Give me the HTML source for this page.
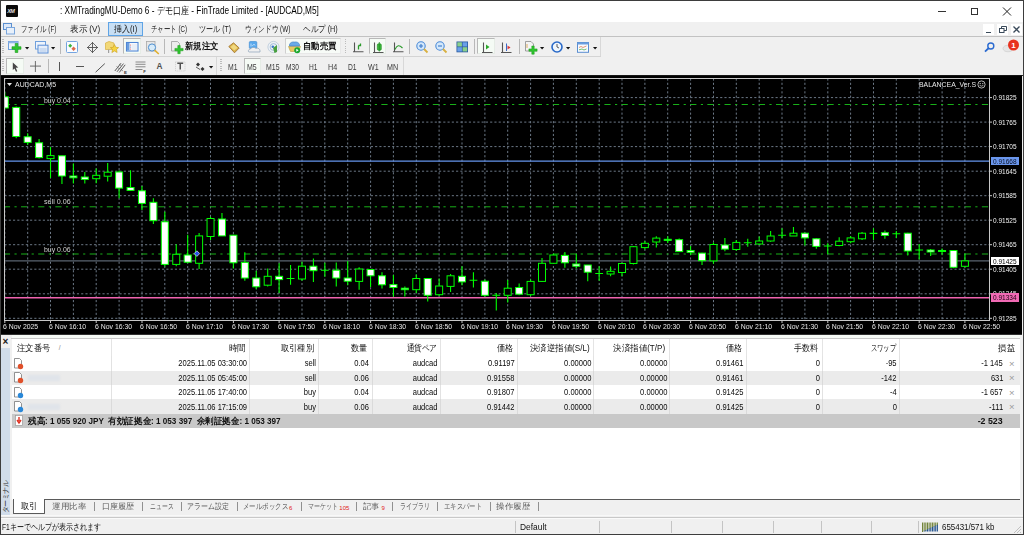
<!DOCTYPE html>
<html><head><meta charset="utf-8"><style>
html,body{margin:0;padding:0;width:1024px;height:535px;overflow:hidden;background:#f0f0f0;}
body{position:relative;font-family:"Liberation Sans", sans-serif;}
.a{position:absolute;}
svg.a{overflow:visible;}
</style></head><body>
<div class="a" style="left:0px;top:0px;width:1024px;height:535px;background:#f0f0f0;"></div><div class="a" style="left:0px;top:0px;width:1024px;height:22px;background:#ffffff;"></div><div class="a" style="left:0px;top:0px;width:1024px;height:1px;background:#3d3d3d;"></div><div class="a" style="left:0px;top:0px;width:1px;height:535px;background:#3d3d3d;"></div><div class="a" style="left:1023px;top:0px;width:1px;height:535px;background:#3d3d3d;"></div><div class="a" style="left:0px;top:534px;width:1024px;height:1px;background:#3d3d3d;"></div><div class="a" style="left:6px;top:5px;width:12px;height:12px;background:#0a0a0a;border-radius:1px;"></div><div class="a t" style="top:7.70px;font-size:5.5px;line-height:6.60px;color:#e0e0e0;font-weight:bold;white-space:nowrap;left:7.2px;letter-spacing:-0.5px;font-style:italic;"><span>XM</span></div><div class="a t" style="top:5.02px;font-size:10.3px;line-height:12.36px;color:#000;font-weight:normal;white-space:nowrap;left:60.4px;--tw:258.9;transform-origin:left center;transform:scaleX(0.8325);"><span>: XMTradingMU-Demo 6 - デモ口座 - FinTrade Limited - [AUDCAD,M5]</span></div><div class="a" style="left:938px;top:10.5px;width:8px;height:1px;background:#333;"></div><div class="a" style="left:970.5px;top:7.5px;width:7px;height:7px;border:1px solid #333;box-sizing:border-box;"></div><svg class="a" style="left:1002px;top:7px" width="10" height="9"><path d="M1 0.5 L9 8.5 M9 0.5 L1 8.5" stroke="#222" stroke-width="1"/></svg><div class="a" style="left:1px;top:22px;width:1022px;height:14px;background:#f0f0f0;"></div><div class="a" style="left:1px;top:36px;width:1022px;height:1px;background:#c2c2c2;"></div><svg class="a" style="left:3px;top:23px" width="13" height="12"><rect x="0.5" y="0.5" width="8" height="6" fill="#dce8f8" stroke="#5b8fd0"/><rect x="3.5" y="4.5" width="8" height="6.5" fill="#e8f0fa" stroke="#7aa6dc"/></svg><div class="a" style="left:108px;top:22.2px;width:34.8px;height:13.5px;background:#c8dff4;border:1px solid #5fa4e6;box-sizing:border-box;"></div><div class="a t" style="top:24.04px;font-size:8.6px;line-height:10.32px;color:#1a1a1a;font-weight:normal;white-space:nowrap;left:21.2px;--tw:35.2;transform-origin:left center;transform:scaleX(0.8186);"><span>ファイル (F)</span></div><div class="a t" style="top:24.04px;font-size:8.6px;line-height:10.32px;color:#1a1a1a;font-weight:normal;white-space:nowrap;left:70px;--tw:30.1;transform-origin:left center;transform:scaleX(1.0379);"><span>表示 (V)</span></div><div class="a t" style="top:24.04px;font-size:8.6px;line-height:10.32px;color:#1a1a1a;font-weight:normal;white-space:nowrap;left:113.5px;--tw:23.2;transform-origin:left center;transform:scaleX(1.0087);"><span>挿入(I)</span></div><div class="a t" style="top:24.04px;font-size:8.6px;line-height:10.32px;color:#1a1a1a;font-weight:normal;white-space:nowrap;left:151px;--tw:36;transform-origin:left center;transform:scaleX(0.8182);"><span>チャート (C)</span></div><div class="a t" style="top:24.04px;font-size:8.6px;line-height:10.32px;color:#1a1a1a;font-weight:normal;white-space:nowrap;left:199px;--tw:32;transform-origin:left center;transform:scaleX(0.8889);"><span>ツール (T)</span></div><div class="a t" style="top:24.04px;font-size:8.6px;line-height:10.32px;color:#1a1a1a;font-weight:normal;white-space:nowrap;left:244.7px;--tw:45.3;transform-origin:left center;transform:scaleX(0.8547);"><span>ウィンドウ (W)</span></div><div class="a t" style="top:24.04px;font-size:8.6px;line-height:10.32px;color:#1a1a1a;font-weight:normal;white-space:nowrap;left:303px;--tw:34.7;transform-origin:left center;transform:scaleX(0.9378);"><span>ヘルプ (H)</span></div><div class="a" style="left:982.6px;top:23.6px;width:11.5px;height:11.8px;background:#ffffff;"></div><div class="a" style="left:996.9px;top:23.6px;width:11.5px;height:11.8px;background:#ffffff;"></div><div class="a" style="left:1010.7px;top:23.6px;width:11.5px;height:11.8px;background:#ffffff;"></div><div class="a" style="left:985.5px;top:31.5px;width:5px;height:1.3px;background:#3a4a5a;"></div><svg class="a" style="left:999px;top:26px" width="8" height="7"><rect x="0.5" y="2.5" width="4.5" height="4" fill="none" stroke="#3a4a5a"/><path d="M2.5 2.5 V0.5 H7.5 V4.5 H5" fill="none" stroke="#3a4a5a"/></svg><svg class="a" style="left:1013px;top:26px" width="7" height="7"><path d="M0.5 0.5 L6.5 6.5 M6.5 0.5 L0.5 6.5" stroke="#3a4a5a" stroke-width="1.3"/></svg><div class="a" style="left:1px;top:55.5px;width:600px;height:1px;background:#d4d4d4;"></div><div class="a" style="left:1px;top:75px;width:1022px;height:1px;background:#2a2a2a;"></div><div class="a" style="left:1px;top:37px;width:600px;height:19px;border-right:1px solid #d8d8d8;box-sizing:border-box;"></div><div class="a" style="left:2.1px;top:39px;width:1.5px;height:1.1px;background:#bcbcbc;"></div><div class="a" style="left:2.1px;top:41.2px;width:1.5px;height:1.1px;background:#bcbcbc;"></div><div class="a" style="left:2.1px;top:43.400000000000006px;width:1.5px;height:1.1px;background:#bcbcbc;"></div><div class="a" style="left:2.1px;top:45.60000000000001px;width:1.5px;height:1.1px;background:#bcbcbc;"></div><div class="a" style="left:2.1px;top:47.80000000000001px;width:1.5px;height:1.1px;background:#bcbcbc;"></div><div class="a" style="left:2.1px;top:50.000000000000014px;width:1.5px;height:1.1px;background:#bcbcbc;"></div><div class="a" style="left:2.1px;top:52.20000000000002px;width:1.5px;height:1.1px;background:#bcbcbc;"></div><svg class="a" style="left:8px;top:41px" width="14" height="12" viewBox="0 0 14 12"><rect x="0.5" y="0.5" width="9.5" height="8" fill="#eef4fc" stroke="#6f9fdc"/><rect x="0.5" y="0.5" width="9.5" height="1.8" fill="#8fb6e8"/><path d="M7.2 2.5 h2.6 v3.2 h3.2 v2.6 h-3.2 v3.2 h-2.6 v-3.2 h-3.2 v-2.6 h3.2z" fill="#2ec52e" stroke="#1a9a1a" stroke-width="0.6"/></svg><svg class="a" style="left:24.599999999999998px;top:46.6px" width="4.2" height="2.5"><path d="M0 0 H4.2 L2.1 2.5 Z" fill="#111"/></svg><svg class="a" style="left:34.5px;top:41px" width="14" height="12.5" viewBox="0 0 14 12.5"><rect x="0.5" y="0.5" width="10" height="7.5" fill="#eef4fc" stroke="#6f9fdc"/><rect x="3" y="4.2" width="10" height="7.8" fill="#e6eefa" stroke="#5c8fd6"/><path d="M4.5 8 h7 M4.5 10 h7" stroke="#9ab8e0" stroke-width="0.7"/></svg><svg class="a" style="left:51.3px;top:46.6px" width="4.2" height="2.5"><path d="M0 0 H4.2 L2.1 2.5 Z" fill="#111"/></svg><div class="a" style="left:60.3px;top:39.3px;width:1px;height:14.700000000000003px;background:#b8b8b8;"></div><svg class="a" style="left:66px;top:41px" width="12" height="12" viewBox="0 0 12 12"><rect x="0.5" y="0.5" width="11" height="11" rx="1" fill="#fafcff" stroke="#74a4e0"/><path d="M4.2 2.8 L6.2 4.8 L4.2 6.8 L2.2 4.8z" fill="#3cb43c"/><path d="M7.6 5.6 L9.8 7.8 L7.6 10 L5.4 7.8z" fill="#e06a4a"/></svg><svg class="a" style="left:87px;top:42px" width="11" height="11" viewBox="0 0 11 11"><path d="M5.5 0.5 L10.5 5.5 L5.5 10.5 L0.5 5.5z" fill="none" stroke="#606060" stroke-width="0.9"/><path d="M5.5 0 V11 M0 5.5 H11" stroke="#505050" stroke-width="0.9"/></svg><svg class="a" style="left:105px;top:41px" width="14" height="12.5" viewBox="0 0 14 12.5"><path d="M0.5 2 L4 0.5 L9 2 V8.5 H0.5z" fill="#f2d878" stroke="#d8b040" stroke-width="0.7"/><path d="M9.5 3.5 L10.8 6.3 L13.6 6.6 L11.5 8.5 L12.1 11.5 L9.5 10 L6.9 11.5 L7.5 8.5 L5.4 6.6 L8.2 6.3z" fill="#f6d440" stroke="#c9a020" stroke-width="0.6"/><rect x="3" y="8.5" width="1.2" height="3.5" fill="#a0a0a0"/></svg><div class="a" style="left:123.4px;top:38.4px;width:18.099999999999994px;height:16.1px;background:#f5fbf5;border:1px solid #e6ece6;border-top-color:#b8b8b8;border-left-color:#b8b8b8;box-sizing:border-box;"></div><svg class="a" style="left:126px;top:42px" width="12.5" height="9.5" viewBox="0 0 12.5 9.5"><rect x="0.5" y="0.5" width="11.5" height="8.5" fill="#ffffff" stroke="#4f86d6" stroke-width="1.1"/><rect x="1" y="1" width="2.5" height="7.5" fill="#6a9ee0"/><circle cx="4.6" cy="3" r="0.5" fill="#d04040"/><circle cx="4.6" cy="5" r="0.5" fill="#4060c0"/><circle cx="4.6" cy="7" r="0.5" fill="#d04040"/><path d="M5.5 3 h5.5 M5.5 5 h5.5 M5.5 7 h5.5" stroke="#c0d0e8" stroke-width="0.7"/></svg><svg class="a" style="left:146px;top:41px" width="14" height="13.5" viewBox="0 0 14 13.5"><rect x="0.5" y="0.5" width="8.5" height="9.5" fill="#e8e8e8" stroke="#a8a8a8" stroke-width="0.8"/><circle cx="6" cy="6.5" r="3.6" fill="#d8ecfa" stroke="#4c8ed0" stroke-width="1"/><path d="M8.6 9.2 L12.8 13" stroke="#e0b030" stroke-width="1.6"/></svg><div class="a" style="left:164.3px;top:39.3px;width:1px;height:14.700000000000003px;background:#b8b8b8;"></div><svg class="a" style="left:171px;top:41px" width="13" height="13" viewBox="0 0 13 13"><path d="M0.5 0.5 H6.5 L8.5 2.5 V10 H0.5z" fill="#ececec" stroke="#9a9a9a" stroke-width="0.8"/><path d="M6.8 4.5 h2.4 v2.9 h2.9 v2.4 h-2.9 v2.9 h-2.4 v-2.9 h-2.9 v-2.4 h2.9z" fill="#2ec52e" stroke="#1a9a1a" stroke-width="0.5"/></svg><div class="a t" style="top:41.10px;font-size:9px;line-height:10.80px;color:#111;font-weight:bold;white-space:nowrap;left:185.2px;--tw:33.4;transform-origin:left center;transform:scaleX(1.1929);"><span>新規注文</span></div><svg class="a" style="left:228px;top:41.5px" width="12" height="11.5" viewBox="0 0 12 11.5"><path d="M0.8 4.5 L5.5 0.8 L11.2 6 L6.5 10.8z" fill="#d9b24a" stroke="#a0702a" stroke-width="0.8"/><path d="M2.5 5 L5.8 2.3 L9.5 5.8 L6.3 8.5z" fill="#f0d880"/></svg><svg class="a" style="left:247.5px;top:41.3px" width="13" height="11.8" viewBox="0 0 13 11.8"><rect x="1.3" y="0.5" width="7.5" height="7" rx="1" fill="#58a8ec" stroke="#3a88d0" stroke-width="0.6"/><path d="M3 2.5 V5.5 M4.5 5 C5 3 7 3 7 4.5" stroke="#e8f4ff" stroke-width="0.7" fill="none"/><path d="M1 11 C0 11 0 8 2.5 8 C3 6 7 6 8 7.5 C10 6.5 12.5 8 12 11z" fill="#f0f0f0" stroke="#8aa0b8" stroke-width="0.7"/></svg><svg class="a" style="left:267.3px;top:41.3px" width="13" height="12" viewBox="0 0 13 12"><circle cx="6.5" cy="6" r="5.6" fill="#eef2f6" stroke="#b8c8d8" stroke-width="0.8"/><circle cx="6.5" cy="6" r="3.4" fill="none" stroke="#90b0d0" stroke-width="0.8"/><circle cx="5.8" cy="5.8" r="1.3" fill="#3a78c8"/><path d="M6 7 L7.5 12 L10 11 L10 4z" fill="#4aa040"/></svg><div class="a" style="left:285.3px;top:38.2px;width:55.5px;height:15.8px;background:#f7fbf7;border:1px solid #cfcfcf;border-right-color:#e8e8e8;border-bottom-color:#e8e8e8;box-sizing:border-box;"></div><svg class="a" style="left:287.5px;top:40.5px" width="13" height="12.5" viewBox="0 0 13 12.5"><path d="M0.5 5.5 L12.5 5.5 L10.5 10.5 L2.5 10.5z" fill="#e8c860" stroke="#b89a40" stroke-width="0.6"/><path d="M1.5 5 C1 2 4 0.5 6.5 1 C9 0.5 12 2 11.5 5z" fill="#6aaae8" stroke="#3a7ac0" stroke-width="0.6"/><circle cx="9.2" cy="9.3" r="3" fill="#1aa830"/><path d="M8.3 7.8 L10.6 9.3 L8.3 10.8z" fill="#fff"/></svg><div class="a t" style="top:41.00px;font-size:9px;line-height:10.80px;color:#111;font-weight:bold;white-space:nowrap;left:303px;--tw:33.3;transform-origin:left center;transform:scaleX(1.1893);"><span>自動売買</span></div><div class="a" style="left:344.6px;top:39px;width:1.5px;height:1.1px;background:#bcbcbc;"></div><div class="a" style="left:344.6px;top:41.2px;width:1.5px;height:1.1px;background:#bcbcbc;"></div><div class="a" style="left:344.6px;top:43.400000000000006px;width:1.5px;height:1.1px;background:#bcbcbc;"></div><div class="a" style="left:344.6px;top:45.60000000000001px;width:1.5px;height:1.1px;background:#bcbcbc;"></div><div class="a" style="left:344.6px;top:47.80000000000001px;width:1.5px;height:1.1px;background:#bcbcbc;"></div><div class="a" style="left:344.6px;top:50.000000000000014px;width:1.5px;height:1.1px;background:#bcbcbc;"></div><div class="a" style="left:344.6px;top:52.20000000000002px;width:1.5px;height:1.1px;background:#bcbcbc;"></div><svg class="a" style="left:352.5px;top:42.3px" width="11" height="11" viewBox="0 0 11 11"><path d="M1.5 0.5 V9.8 M0 9.8 H10.5" stroke="#555" stroke-width="1.1" fill="none"/><path d="M5.5 7.5 V3.5 M5.5 3.5 H7.5 V1.5" stroke="#2a9a2a" stroke-width="1.3" fill="none"/></svg><div class="a" style="left:369.2px;top:38.4px;width:17.19999999999999px;height:16.1px;background:#f5fbf5;border:1px solid #e6ece6;border-top-color:#b8b8b8;border-left-color:#b8b8b8;box-sizing:border-box;"></div><svg class="a" style="left:372.5px;top:41.5px" width="11" height="11.8" viewBox="0 0 11 11.8"><path d="M1.5 0.5 V10.5 M0 10.5 H10.5" stroke="#555" stroke-width="1.1" fill="none"/><rect x="4.3" y="1.8" width="4" height="6.5" rx="1.2" fill="#3ab83a" stroke="#1f8a1f" stroke-width="0.6"/><path d="M6.3 0 V9.5" stroke="#1f8a1f" stroke-width="0.8"/></svg><svg class="a" style="left:392.7px;top:42.3px" width="11" height="11" viewBox="0 0 11 11"><path d="M1.5 0.5 V9.8 M0 9.8 H10.5" stroke="#555" stroke-width="1.1" fill="none"/><path d="M2 7.5 C4 3 6 2.5 9.5 6" stroke="#2a9a2a" stroke-width="1.1" fill="none"/></svg><div class="a" style="left:409.3px;top:39.3px;width:1px;height:14.700000000000003px;background:#b8b8b8;"></div><svg class="a" style="left:415.5px;top:41.2px" width="12.5" height="12.5" viewBox="0 0 12.5 12.5"><circle cx="5" cy="5" r="4.2" fill="#d4e8fb" stroke="#4a8ad8" stroke-width="1.1"/><path d="M8 8 L11.5 11.5" stroke="#d8b040" stroke-width="1.8"/><path d="M3 5 H7 M5 3 V7" stroke="#3a78c8" stroke-width="1.1"/></svg><svg class="a" style="left:435.3px;top:41.2px" width="12.5" height="12.5" viewBox="0 0 12.5 12.5"><circle cx="5" cy="5" r="4.2" fill="#d4e8fb" stroke="#4a8ad8" stroke-width="1.1"/><path d="M8 8 L11.5 11.5" stroke="#d8b040" stroke-width="1.8"/><path d="M3 5 H7" stroke="#3a78c8" stroke-width="1.1"/></svg><svg class="a" style="left:455.5px;top:41.3px" width="12.5" height="11.8" viewBox="0 0 12.5 11.8"><rect x="0.5" y="0.5" width="11.5" height="10.8" fill="#2a5aa0"/><rect x="1.3" y="1.3" width="4.6" height="4.2" fill="#8ad08a"/><rect x="6.6" y="1.3" width="4.6" height="4.2" fill="#6aa0e8"/><rect x="1.3" y="6.2" width="4.6" height="4.3" fill="#6aa0e8"/><rect x="6.6" y="6.2" width="4.6" height="4.3" fill="#8ad08a"/></svg><div class="a" style="left:474px;top:39.3px;width:1px;height:14.700000000000003px;background:#b8b8b8;"></div><div class="a" style="left:477px;top:38.4px;width:17.80000000000001px;height:16.1px;background:#f5fbf5;border:1px solid #e6ece6;border-top-color:#b8b8b8;border-left-color:#b8b8b8;box-sizing:border-box;"></div><svg class="a" style="left:481.5px;top:42px" width="11" height="11.5" viewBox="0 0 11 11.5"><path d="M1.5 0.5 V10.5 M0 10.5 H10.5" stroke="#555" stroke-width="1.1" fill="none"/><path d="M4 2.5 L7.5 5 L4 7.5z" fill="#2aaa2a"/></svg><svg class="a" style="left:501px;top:42px" width="11" height="11.5" viewBox="0 0 11 11.5"><path d="M1.5 0.5 V10.5 M0 10.5 H10.5" stroke="#555" stroke-width="1.1" fill="none"/><path d="M5.5 1.5 V9" stroke="#3a6ac8" stroke-width="1"/><path d="M6.5 3.5 L9.5 5.5 L6.5 7.5z" fill="#d83a3a"/></svg><div class="a" style="left:518.5px;top:39.3px;width:1px;height:14.700000000000003px;background:#b8b8b8;"></div><svg class="a" style="left:524.5px;top:40.8px" width="13" height="13.8" viewBox="0 0 13 13.8"><path d="M0.5 0.5 H6 L8.5 3 V10 H0.5z" fill="#f4f4f4" stroke="#8a8a8a" stroke-width="0.8"/><path d="M2 3 v4" stroke="#d8a040" stroke-width="0.8"/><path d="M6.8 5 h2.4 v2.9 h2.9 v2.4 h-2.9 v2.9 h-2.4 v-2.9 h-2.9 v-2.4 h2.9z" fill="#2ec52e" stroke="#1a9a1a" stroke-width="0.5"/></svg><svg class="a" style="left:539.6999999999999px;top:46.6px" width="4.2" height="2.5"><path d="M0 0 H4.2 L2.1 2.5 Z" fill="#111"/></svg><svg class="a" style="left:550.5px;top:41.3px" width="12" height="12" viewBox="0 0 12 12"><circle cx="6" cy="6" r="5" fill="#f0f6fc" stroke="#2a6ac8" stroke-width="1.6"/><path d="M6 3 V6 L8 7" stroke="#333" stroke-width="0.8" fill="none"/></svg><svg class="a" style="left:566.0px;top:46.6px" width="4.2" height="2.5"><path d="M0 0 H4.2 L2.1 2.5 Z" fill="#111"/></svg><svg class="a" style="left:577px;top:41.8px" width="12" height="10.8" viewBox="0 0 12 10.8"><rect x="0.5" y="0.5" width="11" height="9.8" fill="#f8fbff" stroke="#5a8ed0"/><rect x="0.5" y="0.5" width="11" height="2" fill="#6a9ee0"/><path d="M2 5.5 L4 4.5 L6 5.5 L9.5 4" stroke="#d86a3a" stroke-width="0.7" fill="none"/><path d="M2 7.8 L5 7 L7 8 L9.5 7" stroke="#3aa83a" stroke-width="0.7" fill="none"/></svg><svg class="a" style="left:592.9px;top:46.6px" width="4.2" height="2.5"><path d="M0 0 H4.2 L2.1 2.5 Z" fill="#111"/></svg><svg class="a" style="left:984px;top:41.5px" width="11" height="10.5" viewBox="0 0 11 10.5"><circle cx="6.8" cy="4" r="3" fill="none" stroke="#2a6ad0" stroke-width="1.4"/><path d="M4.8 6 L1 9.6" stroke="#2a6ad0" stroke-width="1.8"/></svg><svg class="a" style="left:1001.5px;top:39px" width="19" height="14" viewBox="0 0 19 14"><ellipse cx="6" cy="9.5" rx="5" ry="3.3" fill="#e6e6e6" stroke="#c8c8c8" stroke-width="0.6"/><circle cx="11.5" cy="6" r="5.5" fill="#e8321e"/><text x="11.5" y="9" font-size="8" font-weight="bold" fill="#fff" text-anchor="middle" font-family="Liberation Sans">1</text></svg><div class="a" style="left:1px;top:57px;width:216px;height:18px;border-right:1px solid #d8d8d8;box-sizing:border-box;"></div><div class="a" style="left:2.4px;top:59px;width:1.5px;height:1.1px;background:#bcbcbc;"></div><div class="a" style="left:2.4px;top:61.2px;width:1.5px;height:1.1px;background:#bcbcbc;"></div><div class="a" style="left:2.4px;top:63.400000000000006px;width:1.5px;height:1.1px;background:#bcbcbc;"></div><div class="a" style="left:2.4px;top:65.60000000000001px;width:1.5px;height:1.1px;background:#bcbcbc;"></div><div class="a" style="left:2.4px;top:67.80000000000001px;width:1.5px;height:1.1px;background:#bcbcbc;"></div><div class="a" style="left:2.4px;top:70.00000000000001px;width:1.5px;height:1.1px;background:#bcbcbc;"></div><div class="a" style="left:6.2px;top:58.1px;width:18.0px;height:15.600000000000001px;background:#f5fbf5;border:1px solid #e6ece6;border-top-color:#b8b8b8;border-left-color:#b8b8b8;box-sizing:border-box;"></div><svg class="a" style="left:11.5px;top:61.5px" width="7" height="10" viewBox="0 0 7 10"><path d="M0.8 0.5 L6.3 5.6 L3.8 5.8 L5.3 9.3 L4 9.8 L2.5 6.4 L0.8 8z" fill="#474747"/></svg><svg class="a" style="left:30px;top:61.4px" width="11" height="11" viewBox="0 0 11 11"><path d="M5.4 0 V11 M0 5.1 H11" stroke="#606060" stroke-width="0.9"/></svg><div class="a" style="left:47.6px;top:58.7px;width:1px;height:14.5px;background:#b8b8b8;"></div><div class="a" style="left:59px;top:62px;width:1px;height:9px;background:#555;"></div><div class="a" style="left:75.7px;top:66px;width:8.6px;height:1px;background:#555;"></div><svg class="a" style="left:95px;top:62.5px" width="10.5" height="10" viewBox="0 0 10.5 10"><path d="M0.6 9.2 L9.8 0.6" stroke="#555" stroke-width="1"/></svg><svg class="a" style="left:113.5px;top:60.5px" width="13" height="12.5" viewBox="0 0 13 12.5"><path d="M0.8 10 L7 2.2 M3 10.8 L9.5 2.6 M5.2 11.5 L11.2 3.8" stroke="#4a4a4a" stroke-width="0.9"/><path d="M2.5 5.5 L5 7.5 M5 3 L7.5 5 M6.5 8 L9 10" stroke="#707070" stroke-width="0.7"/><text x="10" y="12.5" font-size="4.4" font-weight="bold" fill="#333" font-family="Liberation Sans">E</text></svg><svg class="a" style="left:134.5px;top:60.5px" width="12" height="12.5" viewBox="0 0 12 12.5"><path d="M0.5 1 H10.5 M0.5 3.3 H10.5 M0.5 5.8 H10.5 M0.5 8.5 H7.5" stroke="#707070" stroke-width="0.8"/><text x="8.3" y="12.3" font-size="4.2" font-weight="bold" fill="#333" font-family="Liberation Sans">F</text></svg><div class="a t" style="top:61.82px;font-size:8.3px;line-height:9.96px;color:#505050;font-weight:bold;white-space:nowrap;left:156.6px;"><span>A</span></div><svg class="a" style="left:174.5px;top:61.2px" width="10.5" height="10.5" viewBox="0 0 10.5 10.5"><rect x="0.5" y="0.8" width="9.5" height="9.2" fill="none" stroke="#b8b8b8" stroke-width="0.6" stroke-dasharray="1,1"/><path d="M2.3 2.3 H8.2 M5.25 2.3 V8.5" stroke="#505050" stroke-width="1.5"/></svg><svg class="a" style="left:195px;top:61.8px" width="10.5" height="9.5" viewBox="0 0 10.5 9.5"><path d="M1 2.5 L3 0.5 L5 2.5 L3 4.5z" fill="#333"/><path d="M5.5 7 L7.5 5 L9.5 7 L7.5 9z" fill="#333"/><path d="M1 5 L5 7.5" stroke="#333" stroke-width="0.8"/></svg><svg class="a" style="left:208.9px;top:66.0px" width="4.2" height="2.5"><path d="M0 0 H4.2 L2.1 2.5 Z" fill="#111"/></svg><div class="a" style="left:220px;top:59px;width:1.5px;height:1.1px;background:#bcbcbc;"></div><div class="a" style="left:220px;top:61.2px;width:1.5px;height:1.1px;background:#bcbcbc;"></div><div class="a" style="left:220px;top:63.400000000000006px;width:1.5px;height:1.1px;background:#bcbcbc;"></div><div class="a" style="left:220px;top:65.60000000000001px;width:1.5px;height:1.1px;background:#bcbcbc;"></div><div class="a" style="left:220px;top:67.80000000000001px;width:1.5px;height:1.1px;background:#bcbcbc;"></div><div class="a" style="left:220px;top:70.00000000000001px;width:1.5px;height:1.1px;background:#bcbcbc;"></div><div class="a" style="left:244px;top:58.1px;width:17.19999999999999px;height:15.600000000000001px;background:#f5fbf5;border:1px solid #e6ece6;border-top-color:#b8b8b8;border-left-color:#b8b8b8;box-sizing:border-box;"></div><div class="a" style="left:217px;top:57px;width:186.5px;height:18px;border-right:1px solid #d8d8d8;box-sizing:border-box;"></div><div class="a t" style="top:62.68px;font-size:8.2px;line-height:9.84px;color:#3c3c3c;font-weight:normal;white-space:nowrap;left:227.5px;--tw:9.5;transform-origin:left center;transform:scaleX(0.8636);"><span>M1</span></div><div class="a t" style="top:62.68px;font-size:8.2px;line-height:9.84px;color:#3c3c3c;font-weight:normal;white-space:nowrap;left:247.3px;--tw:9.7;transform-origin:left center;transform:scaleX(0.8818);"><span>M5</span></div><div class="a t" style="top:62.68px;font-size:8.2px;line-height:9.84px;color:#3c3c3c;font-weight:normal;white-space:nowrap;left:265.5px;--tw:13.5;transform-origin:left center;transform:scaleX(0.9000);"><span>M15</span></div><div class="a t" style="top:62.68px;font-size:8.2px;line-height:9.84px;color:#3c3c3c;font-weight:normal;white-space:nowrap;left:286px;--tw:12.8;transform-origin:left center;transform:scaleX(0.8533);"><span>M30</span></div><div class="a t" style="top:62.68px;font-size:8.2px;line-height:9.84px;color:#3c3c3c;font-weight:normal;white-space:nowrap;left:308.5px;--tw:8.5;transform-origin:left center;transform:scaleX(0.8500);"><span>H1</span></div><div class="a t" style="top:62.68px;font-size:8.2px;line-height:9.84px;color:#3c3c3c;font-weight:normal;white-space:nowrap;left:327.8px;--tw:9.2;transform-origin:left center;transform:scaleX(0.9200);"><span>H4</span></div><div class="a t" style="top:62.68px;font-size:8.2px;line-height:9.84px;color:#3c3c3c;font-weight:normal;white-space:nowrap;left:348.2px;--tw:8.6;transform-origin:left center;transform:scaleX(0.8600);"><span>D1</span></div><div class="a t" style="top:62.68px;font-size:8.2px;line-height:9.84px;color:#3c3c3c;font-weight:normal;white-space:nowrap;left:367.6px;--tw:10.7;transform-origin:left center;transform:scaleX(0.8917);"><span>W1</span></div><div class="a t" style="top:62.68px;font-size:8.2px;line-height:9.84px;color:#3c3c3c;font-weight:normal;white-space:nowrap;left:386.5px;--tw:11.1;transform-origin:left center;transform:scaleX(0.8538);"><span>MN</span></div><svg class="a" style="left:0;top:0" width="1024" height="535" viewBox="0 0 1024 535"><rect x="1" y="75.5" width="1021" height="259.3" fill="#000"/><clipPath id="pc"><rect x="4.5" y="78.5" width="985.0" height="242.0"/></clipPath><path d="M4.5 97.6 H989.5 M4.5 122.1 H989.5 M4.5 146.6 H989.5 M4.5 171.2 H989.5 M4.5 195.7 H989.5 M4.5 220.2 H989.5 M4.5 244.7 H989.5 M4.5 269.2 H989.5 M4.5 293.8 H989.5 M4.5 318.3 H989.5 M4.8 78.5 V320.5 M27.7 78.5 V320.5 M50.5 78.5 V320.5 M73.4 78.5 V320.5 M96.2 78.5 V320.5 M119.1 78.5 V320.5 M142.0 78.5 V320.5 M164.8 78.5 V320.5 M187.7 78.5 V320.5 M210.5 78.5 V320.5 M233.4 78.5 V320.5 M256.3 78.5 V320.5 M279.1 78.5 V320.5 M302.0 78.5 V320.5 M324.8 78.5 V320.5 M347.7 78.5 V320.5 M370.6 78.5 V320.5 M393.4 78.5 V320.5 M416.3 78.5 V320.5 M439.1 78.5 V320.5 M462.0 78.5 V320.5 M484.9 78.5 V320.5 M507.7 78.5 V320.5 M530.6 78.5 V320.5 M553.4 78.5 V320.5 M576.3 78.5 V320.5 M599.2 78.5 V320.5 M622.0 78.5 V320.5 M644.9 78.5 V320.5 M667.7 78.5 V320.5 M690.6 78.5 V320.5 M713.5 78.5 V320.5 M736.3 78.5 V320.5 M759.2 78.5 V320.5 M782.0 78.5 V320.5 M804.9 78.5 V320.5 M827.8 78.5 V320.5 M850.6 78.5 V320.5 M873.5 78.5 V320.5 M896.3 78.5 V320.5 M919.2 78.5 V320.5 M942.1 78.5 V320.5 M964.9 78.5 V320.5" stroke="#6c7886" stroke-width="1" stroke-dasharray="2.13,2.13" fill="none"/><path d="M4.5 104.5 H989.5" stroke="#18b018" stroke-width="1.0" stroke-dasharray="6.2,4.4,2.2,4.358" stroke-dashoffset="0.62" fill="none"/><path d="M4.5 206.8 H989.5" stroke="#18b018" stroke-width="1.0" stroke-dasharray="6.2,4.4,2.2,4.358" stroke-dashoffset="0.62" fill="none"/><path d="M4.5 254.0 H989.5" stroke="#18b018" stroke-width="1.0" stroke-dasharray="6.2,4.4,2.2,4.358" stroke-dashoffset="0.62" fill="none"/><path d="M4.5 161.2 H989.5" stroke="#6495ed" stroke-width="1.2"/><path d="M4.5 260.9 H989.5" stroke="#5a6470" stroke-width="1.2"/><path d="M4.5 297.8 H989.5" stroke="#f064b0" stroke-width="1.6"/><g clip-path="url(#pc)"><path d="M4.80 92.3 V108.0" stroke="#00ff00" stroke-width="1.1"/><rect x="1.30" y="96.8" width="7" height="11.20" fill="#ffffff" stroke="#00ff00" stroke-width="1"/><path d="M16.23 106.5 V138.3" stroke="#00ff00" stroke-width="1.1"/><rect x="12.73" y="107.4" width="7" height="29.10" fill="#ffffff" stroke="#00ff00" stroke-width="1"/><path d="M27.66 133.2 V145.0" stroke="#00ff00" stroke-width="1.1"/><rect x="24.16" y="136.8" width="7" height="5.60" fill="#ffffff" stroke="#00ff00" stroke-width="1"/><path d="M39.09 139.0 V158.5" stroke="#00ff00" stroke-width="1.1"/><rect x="35.59" y="142.8" width="7" height="14.80" fill="#ffffff" stroke="#00ff00" stroke-width="1"/><path d="M50.52 147.0 V178.0" stroke="#00ff00" stroke-width="1.1"/><rect x="47.02" y="155.6" width="7" height="3.00" fill="#000000" stroke="#00ff00" stroke-width="1"/><path d="M61.95 155.8 V183.9" stroke="#00ff00" stroke-width="1.1"/><rect x="58.45" y="155.8" width="7" height="20.20" fill="#ffffff" stroke="#00ff00" stroke-width="1"/><path d="M73.38 163.4 V183.6" stroke="#00ff00" stroke-width="1.1"/><rect x="69.88" y="176.0" width="7" height="1.80" fill="#ffffff" stroke="#00ff00" stroke-width="1"/><path d="M84.81 172.0 V183.6" stroke="#00ff00" stroke-width="1.1"/><rect x="81.31" y="177.0" width="7" height="2.40" fill="#ffffff" stroke="#00ff00" stroke-width="1"/><path d="M96.24 168.6 V183.2" stroke="#00ff00" stroke-width="1.1"/><rect x="92.74" y="175.3" width="7" height="3.40" fill="#000000" stroke="#00ff00" stroke-width="1"/><path d="M107.67 163.0 V181.4" stroke="#00ff00" stroke-width="1.1"/><rect x="104.17" y="172.2" width="7" height="4.00" fill="#000000" stroke="#00ff00" stroke-width="1"/><path d="M119.10 170.6 V198.2" stroke="#00ff00" stroke-width="1.1"/><rect x="115.60" y="172.0" width="7" height="16.10" fill="#ffffff" stroke="#00ff00" stroke-width="1"/><path d="M130.53 170.2 V191.0" stroke="#00ff00" stroke-width="1.1"/><rect x="127.03" y="187.5" width="7" height="2.90" fill="#ffffff" stroke="#00ff00" stroke-width="1"/><path d="M141.96 185.9 V210.0" stroke="#00ff00" stroke-width="1.1"/><rect x="138.46" y="190.8" width="7" height="12.60" fill="#ffffff" stroke="#00ff00" stroke-width="1"/><path d="M153.39 198.2 V224.0" stroke="#00ff00" stroke-width="1.1"/><rect x="149.89" y="202.3" width="7" height="18.40" fill="#ffffff" stroke="#00ff00" stroke-width="1"/><path d="M164.82 211.7 V266.6" stroke="#00ff00" stroke-width="1.1"/><rect x="161.32" y="221.8" width="7" height="42.60" fill="#ffffff" stroke="#00ff00" stroke-width="1"/><path d="M176.25 244.2 V266.2" stroke="#00ff00" stroke-width="1.1"/><rect x="172.75" y="254.3" width="7" height="10.10" fill="#000000" stroke="#00ff00" stroke-width="1"/><path d="M187.68 234.8 V263.3" stroke="#00ff00" stroke-width="1.1"/><rect x="184.18" y="255.0" width="7" height="7.20" fill="#ffffff" stroke="#00ff00" stroke-width="1"/><path d="M199.11 233.0 V268.9" stroke="#00ff00" stroke-width="1.1"/><rect x="195.61" y="235.9" width="7" height="27.40" fill="#000000" stroke="#00ff00" stroke-width="1"/><path d="M210.54 216.8 V240.0" stroke="#00ff00" stroke-width="1.1"/><rect x="207.04" y="218.5" width="7" height="18.00" fill="#000000" stroke="#00ff00" stroke-width="1"/><path d="M221.97 213.0 V235.9" stroke="#00ff00" stroke-width="1.1"/><rect x="218.47" y="219.0" width="7" height="16.90" fill="#ffffff" stroke="#00ff00" stroke-width="1"/><path d="M233.40 234.8 V268.4" stroke="#00ff00" stroke-width="1.1"/><rect x="229.90" y="235.2" width="7" height="27.60" fill="#ffffff" stroke="#00ff00" stroke-width="1"/><path d="M244.83 252.3 V280.8" stroke="#00ff00" stroke-width="1.1"/><rect x="241.33" y="262.4" width="7" height="15.60" fill="#ffffff" stroke="#00ff00" stroke-width="1"/><path d="M256.26 270.7 V289.3" stroke="#00ff00" stroke-width="1.1"/><rect x="252.76" y="278.0" width="7" height="8.80" fill="#ffffff" stroke="#00ff00" stroke-width="1"/><path d="M267.69 268.4 V286.4" stroke="#00ff00" stroke-width="1.1"/><rect x="264.19" y="276.3" width="7" height="8.90" fill="#000000" stroke="#00ff00" stroke-width="1"/><path d="M279.12 263.3 V293.1" stroke="#00ff00" stroke-width="1.1"/><rect x="275.62" y="276.3" width="7" height="3.30" fill="#ffffff" stroke="#00ff00" stroke-width="1"/><path d="M290.55 265.0 V284.8" stroke="#00ff00" stroke-width="1.1"/><path d="M286.65 278.5 H294.45" stroke="#00ff00" stroke-width="1.1"/><path d="M301.98 261.7 V280.8" stroke="#00ff00" stroke-width="1.1"/><rect x="298.48" y="266.2" width="7" height="12.80" fill="#000000" stroke="#00ff00" stroke-width="1"/><path d="M313.41 258.5 V281.9" stroke="#00ff00" stroke-width="1.1"/><rect x="309.91" y="266.2" width="7" height="4.50" fill="#ffffff" stroke="#00ff00" stroke-width="1"/><path d="M324.84 262.8 V276.7" stroke="#00ff00" stroke-width="1.1"/><path d="M320.94 270.2 H328.74" stroke="#00ff00" stroke-width="1.1"/><path d="M336.27 262.4 V286.4" stroke="#00ff00" stroke-width="1.1"/><rect x="332.77" y="270.2" width="7" height="7.80" fill="#ffffff" stroke="#00ff00" stroke-width="1"/><path d="M347.70 261.0 V285.2" stroke="#00ff00" stroke-width="1.1"/><rect x="344.20" y="278.0" width="7" height="3.20" fill="#ffffff" stroke="#00ff00" stroke-width="1"/><path d="M359.13 267.3 V289.7" stroke="#00ff00" stroke-width="1.1"/><rect x="355.63" y="269.0" width="7" height="12.40" fill="#000000" stroke="#00ff00" stroke-width="1"/><path d="M370.56 269.5 V287.0" stroke="#00ff00" stroke-width="1.1"/><rect x="367.06" y="269.5" width="7" height="6.30" fill="#ffffff" stroke="#00ff00" stroke-width="1"/><path d="M381.99 272.2 V288.6" stroke="#00ff00" stroke-width="1.1"/><rect x="378.49" y="275.8" width="7" height="9.00" fill="#ffffff" stroke="#00ff00" stroke-width="1"/><path d="M393.42 275.1 V296.5" stroke="#00ff00" stroke-width="1.1"/><rect x="389.92" y="284.6" width="7" height="2.90" fill="#ffffff" stroke="#00ff00" stroke-width="1"/><path d="M404.85 286.4 V296.5" stroke="#00ff00" stroke-width="1.1"/><rect x="401.35" y="288.2" width="7" height="1.50" fill="#ffffff" stroke="#00ff00" stroke-width="1"/><path d="M416.28 274.5 V293.0" stroke="#00ff00" stroke-width="1.1"/><rect x="412.78" y="278.5" width="7" height="11.20" fill="#000000" stroke="#00ff00" stroke-width="1"/><path d="M427.71 278.5 V301.4" stroke="#00ff00" stroke-width="1.1"/><rect x="424.21" y="278.5" width="7" height="16.80" fill="#ffffff" stroke="#00ff00" stroke-width="1"/><path d="M439.14 278.5 V296.0" stroke="#00ff00" stroke-width="1.1"/><rect x="435.64" y="286.0" width="7" height="8.70" fill="#000000" stroke="#00ff00" stroke-width="1"/><path d="M450.57 274.0 V292.0" stroke="#00ff00" stroke-width="1.1"/><rect x="447.07" y="275.8" width="7" height="10.60" fill="#000000" stroke="#00ff00" stroke-width="1"/><path d="M462.00 266.2 V285.2" stroke="#00ff00" stroke-width="1.1"/><rect x="458.50" y="276.3" width="7" height="5.60" fill="#ffffff" stroke="#00ff00" stroke-width="1"/><path d="M473.43 272.2 V287.5" stroke="#00ff00" stroke-width="1.1"/><path d="M469.53 280.3 H477.33" stroke="#00ff00" stroke-width="1.1"/><path d="M484.86 279.6 V296.5" stroke="#00ff00" stroke-width="1.1"/><rect x="481.36" y="281.2" width="7" height="14.10" fill="#ffffff" stroke="#00ff00" stroke-width="1"/><path d="M496.29 293.1 V310.4" stroke="#00ff00" stroke-width="1.1"/><path d="M492.39 295.3 H500.19" stroke="#00ff00" stroke-width="1.1"/><path d="M507.72 280.0 V302.5" stroke="#00ff00" stroke-width="1.1"/><rect x="504.22" y="288.2" width="7" height="7.10" fill="#000000" stroke="#00ff00" stroke-width="1"/><path d="M519.15 283.4 V295.3" stroke="#00ff00" stroke-width="1.1"/><rect x="515.65" y="287.5" width="7" height="6.70" fill="#ffffff" stroke="#00ff00" stroke-width="1"/><path d="M530.58 279.6 V296.0" stroke="#00ff00" stroke-width="1.1"/><rect x="527.08" y="281.4" width="7" height="13.30" fill="#000000" stroke="#00ff00" stroke-width="1"/><path d="M542.01 257.9 V281.9" stroke="#00ff00" stroke-width="1.1"/><rect x="538.51" y="263.3" width="7" height="18.10" fill="#000000" stroke="#00ff00" stroke-width="1"/><path d="M553.44 253.8 V263.3" stroke="#00ff00" stroke-width="1.1"/><rect x="549.94" y="255.0" width="7" height="8.30" fill="#000000" stroke="#00ff00" stroke-width="1"/><path d="M564.87 252.0 V267.7" stroke="#00ff00" stroke-width="1.1"/><rect x="561.37" y="255.4" width="7" height="7.40" fill="#ffffff" stroke="#00ff00" stroke-width="1"/><path d="M576.30 253.8 V268.4" stroke="#00ff00" stroke-width="1.1"/><rect x="572.80" y="264.0" width="7" height="2.20" fill="#ffffff" stroke="#00ff00" stroke-width="1"/><path d="M587.73 265.0 V281.2" stroke="#00ff00" stroke-width="1.1"/><rect x="584.23" y="265.0" width="7" height="7.20" fill="#ffffff" stroke="#00ff00" stroke-width="1"/><path d="M599.16 266.2 V280.8" stroke="#00ff00" stroke-width="1.1"/><path d="M595.26 273.5 H603.06" stroke="#00ff00" stroke-width="1.1"/><path d="M610.59 266.5 V276.3" stroke="#00ff00" stroke-width="1.1"/><rect x="607.09" y="271.3" width="7" height="2.70" fill="#000000" stroke="#00ff00" stroke-width="1"/><path d="M622.02 262.8 V276.3" stroke="#00ff00" stroke-width="1.1"/><rect x="618.52" y="263.5" width="7" height="9.00" fill="#000000" stroke="#00ff00" stroke-width="1"/><path d="M633.45 246.0 V264.4" stroke="#00ff00" stroke-width="1.1"/><rect x="629.95" y="246.7" width="7" height="16.80" fill="#000000" stroke="#00ff00" stroke-width="1"/><path d="M644.88 241.0 V249.4" stroke="#00ff00" stroke-width="1.1"/><rect x="641.38" y="243.3" width="7" height="4.30" fill="#000000" stroke="#00ff00" stroke-width="1"/><path d="M656.31 236.3 V247.6" stroke="#00ff00" stroke-width="1.1"/><rect x="652.81" y="238.1" width="7" height="3.90" fill="#000000" stroke="#00ff00" stroke-width="1"/><path d="M667.74 236.3 V243.0" stroke="#00ff00" stroke-width="1.1"/><rect x="664.24" y="239.3" width="7" height="1.10" fill="#ffffff" stroke="#00ff00" stroke-width="1"/><path d="M679.17 238.6 V252.0" stroke="#00ff00" stroke-width="1.1"/><rect x="675.67" y="239.7" width="7" height="11.90" fill="#ffffff" stroke="#00ff00" stroke-width="1"/><path d="M690.60 246.0 V255.0" stroke="#00ff00" stroke-width="1.1"/><rect x="687.10" y="250.5" width="7" height="1.80" fill="#ffffff" stroke="#00ff00" stroke-width="1"/><path d="M702.03 252.7 V265.0" stroke="#00ff00" stroke-width="1.1"/><rect x="698.53" y="253.1" width="7" height="7.60" fill="#ffffff" stroke="#00ff00" stroke-width="1"/><path d="M713.46 242.5 V263.7" stroke="#00ff00" stroke-width="1.1"/><rect x="709.96" y="244.5" width="7" height="16.40" fill="#000000" stroke="#00ff00" stroke-width="1"/><path d="M724.89 237.9 V251.3" stroke="#00ff00" stroke-width="1.1"/><rect x="721.39" y="245.0" width="7" height="4.10" fill="#ffffff" stroke="#00ff00" stroke-width="1"/><path d="M736.32 240.1 V250.7" stroke="#00ff00" stroke-width="1.1"/><rect x="732.82" y="242.4" width="7" height="7.10" fill="#000000" stroke="#00ff00" stroke-width="1"/><path d="M747.75 238.8 V246.8" stroke="#00ff00" stroke-width="1.1"/><path d="M743.85 242.8 H751.65" stroke="#00ff00" stroke-width="1.1"/><path d="M759.18 236.5 V245.0" stroke="#00ff00" stroke-width="1.1"/><rect x="755.68" y="241.0" width="7" height="3.00" fill="#000000" stroke="#00ff00" stroke-width="1"/><path d="M770.61 231.1 V241.7" stroke="#00ff00" stroke-width="1.1"/><rect x="767.11" y="236.0" width="7" height="5.00" fill="#000000" stroke="#00ff00" stroke-width="1"/><path d="M782.04 228.2 V238.3" stroke="#00ff00" stroke-width="1.1"/><path d="M778.14 235.3 H785.94" stroke="#00ff00" stroke-width="1.1"/><path d="M793.47 227.1 V236.0" stroke="#00ff00" stroke-width="1.1"/><rect x="789.97" y="233.2" width="7" height="2.80" fill="#000000" stroke="#00ff00" stroke-width="1"/><path d="M804.90 232.7 V245.5" stroke="#00ff00" stroke-width="1.1"/><rect x="801.40" y="233.2" width="7" height="4.70" fill="#ffffff" stroke="#00ff00" stroke-width="1"/><path d="M816.33 238.3 V248.7" stroke="#00ff00" stroke-width="1.1"/><rect x="812.83" y="238.8" width="7" height="7.60" fill="#ffffff" stroke="#00ff00" stroke-width="1"/><path d="M827.76 243.3 V254.0" stroke="#00ff00" stroke-width="1.1"/><path d="M823.86 246.0 H831.66" stroke="#00ff00" stroke-width="1.1"/><path d="M839.19 237.2 V246.2" stroke="#00ff00" stroke-width="1.1"/><rect x="835.69" y="241.2" width="7" height="4.30" fill="#000000" stroke="#00ff00" stroke-width="1"/><path d="M850.62 236.0 V243.3" stroke="#00ff00" stroke-width="1.1"/><rect x="847.12" y="237.9" width="7" height="3.80" fill="#000000" stroke="#00ff00" stroke-width="1"/><path d="M862.05 232.0 V240.1" stroke="#00ff00" stroke-width="1.1"/><rect x="858.55" y="233.2" width="7" height="5.60" fill="#000000" stroke="#00ff00" stroke-width="1"/><path d="M873.48 228.2 V240.1" stroke="#00ff00" stroke-width="1.1"/><path d="M869.58 233.4 H877.38" stroke="#00ff00" stroke-width="1.1"/><path d="M884.91 230.5 V238.8" stroke="#00ff00" stroke-width="1.1"/><rect x="881.41" y="232.7" width="7" height="2.70" fill="#ffffff" stroke="#00ff00" stroke-width="1"/><path d="M896.34 231.1 V237.9" stroke="#00ff00" stroke-width="1.1"/><path d="M892.44 233.7 H900.24" stroke="#00ff00" stroke-width="1.1"/><path d="M907.77 232.7 V255.5" stroke="#00ff00" stroke-width="1.1"/><rect x="904.27" y="233.2" width="7" height="17.80" fill="#ffffff" stroke="#00ff00" stroke-width="1"/><path d="M919.20 243.9 V259.4" stroke="#00ff00" stroke-width="1.1"/><path d="M915.30 250.0 H923.10" stroke="#00ff00" stroke-width="1.1"/><path d="M930.63 249.0 V256.0" stroke="#00ff00" stroke-width="1.1"/><rect x="927.13" y="250.0" width="7" height="2.00" fill="#ffffff" stroke="#00ff00" stroke-width="1"/><path d="M942.06 248.6 V254.2" stroke="#00ff00" stroke-width="1.1"/><rect x="938.56" y="250.5" width="7" height="1.00" fill="#ffffff" stroke="#00ff00" stroke-width="1"/><path d="M953.49 250.0 V268.2" stroke="#00ff00" stroke-width="1.1"/><rect x="949.99" y="250.5" width="7" height="16.80" fill="#ffffff" stroke="#00ff00" stroke-width="1"/><path d="M964.92 253.4 V267.4" stroke="#00ff00" stroke-width="1.1"/><rect x="961.42" y="260.9" width="7" height="5.40" fill="#000000" stroke="#00ff00" stroke-width="1"/></g><path d="M196.9 250.8 L199.7 253.6 L196.9 256.4 L194.1 253.6z" fill="#2a50e8" stroke="#ffffff" stroke-width="0.6"/><rect x="4.5" y="78.5" width="985.0" height="242.0" fill="none" stroke="#c8c8c8" stroke-width="1"/><path d="M4.8 320.5 V323.0 M50.5 320.5 V323.0 M96.2 320.5 V323.0 M142.0 320.5 V323.0 M187.7 320.5 V323.0 M233.4 320.5 V323.0 M279.1 320.5 V323.0 M324.8 320.5 V323.0 M370.6 320.5 V323.0 M416.3 320.5 V323.0 M462.0 320.5 V323.0 M507.7 320.5 V323.0 M553.4 320.5 V323.0 M599.2 320.5 V323.0 M644.9 320.5 V323.0 M690.6 320.5 V323.0 M736.3 320.5 V323.0 M782.0 320.5 V323.0 M827.8 320.5 V323.0 M873.5 320.5 V323.0 M919.2 320.5 V323.0 M964.9 320.5 V323.0 M989.5 97.6 H992.0 M989.5 122.1 H992.0 M989.5 146.6 H992.0 M989.5 171.2 H992.0 M989.5 195.7 H992.0 M989.5 220.2 H992.0 M989.5 244.7 H992.0 M989.5 269.2 H992.0 M989.5 293.8 H992.0 M989.5 318.3 H992.0" stroke="#c8c8c8" stroke-width="1"/></svg><div class="a t" style="top:323.02px;font-size:7.3px;line-height:8.76px;color:#e8e8e8;font-weight:normal;white-space:nowrap;left:3.3px;--tw:35.2;transform-origin:left center;transform:scaleX(0.9514);"><span>6 Nov 2025</span></div><div class="a t" style="top:323.02px;font-size:7.3px;line-height:8.76px;color:#e8e8e8;font-weight:normal;white-space:nowrap;left:49.019999999999996px;--tw:37.1;transform-origin:left center;transform:scaleX(0.9513);"><span>6 Nov 16:10</span></div><div class="a t" style="top:323.02px;font-size:7.3px;line-height:8.76px;color:#e8e8e8;font-weight:normal;white-space:nowrap;left:94.74px;--tw:37.1;transform-origin:left center;transform:scaleX(0.9513);"><span>6 Nov 16:30</span></div><div class="a t" style="top:323.02px;font-size:7.3px;line-height:8.76px;color:#e8e8e8;font-weight:normal;white-space:nowrap;left:140.46px;--tw:37.1;transform-origin:left center;transform:scaleX(0.9513);"><span>6 Nov 16:50</span></div><div class="a t" style="top:323.02px;font-size:7.3px;line-height:8.76px;color:#e8e8e8;font-weight:normal;white-space:nowrap;left:186.18px;--tw:37.1;transform-origin:left center;transform:scaleX(0.9513);"><span>6 Nov 17:10</span></div><div class="a t" style="top:323.02px;font-size:7.3px;line-height:8.76px;color:#e8e8e8;font-weight:normal;white-space:nowrap;left:231.9px;--tw:37.1;transform-origin:left center;transform:scaleX(0.9513);"><span>6 Nov 17:30</span></div><div class="a t" style="top:323.02px;font-size:7.3px;line-height:8.76px;color:#e8e8e8;font-weight:normal;white-space:nowrap;left:277.62px;--tw:37.1;transform-origin:left center;transform:scaleX(0.9513);"><span>6 Nov 17:50</span></div><div class="a t" style="top:323.02px;font-size:7.3px;line-height:8.76px;color:#e8e8e8;font-weight:normal;white-space:nowrap;left:323.34px;--tw:37.1;transform-origin:left center;transform:scaleX(0.9513);"><span>6 Nov 18:10</span></div><div class="a t" style="top:323.02px;font-size:7.3px;line-height:8.76px;color:#e8e8e8;font-weight:normal;white-space:nowrap;left:369.06px;--tw:37.1;transform-origin:left center;transform:scaleX(0.9513);"><span>6 Nov 18:30</span></div><div class="a t" style="top:323.02px;font-size:7.3px;line-height:8.76px;color:#e8e8e8;font-weight:normal;white-space:nowrap;left:414.78000000000003px;--tw:37.1;transform-origin:left center;transform:scaleX(0.9513);"><span>6 Nov 18:50</span></div><div class="a t" style="top:323.02px;font-size:7.3px;line-height:8.76px;color:#e8e8e8;font-weight:normal;white-space:nowrap;left:460.5px;--tw:37.1;transform-origin:left center;transform:scaleX(0.9513);"><span>6 Nov 19:10</span></div><div class="a t" style="top:323.02px;font-size:7.3px;line-height:8.76px;color:#e8e8e8;font-weight:normal;white-space:nowrap;left:506.21999999999997px;--tw:37.1;transform-origin:left center;transform:scaleX(0.9513);"><span>6 Nov 19:30</span></div><div class="a t" style="top:323.02px;font-size:7.3px;line-height:8.76px;color:#e8e8e8;font-weight:normal;white-space:nowrap;left:551.9399999999999px;--tw:37.1;transform-origin:left center;transform:scaleX(0.9513);"><span>6 Nov 19:50</span></div><div class="a t" style="top:323.02px;font-size:7.3px;line-height:8.76px;color:#e8e8e8;font-weight:normal;white-space:nowrap;left:597.66px;--tw:37.1;transform-origin:left center;transform:scaleX(0.9513);"><span>6 Nov 20:10</span></div><div class="a t" style="top:323.02px;font-size:7.3px;line-height:8.76px;color:#e8e8e8;font-weight:normal;white-space:nowrap;left:643.3799999999999px;--tw:37.1;transform-origin:left center;transform:scaleX(0.9513);"><span>6 Nov 20:30</span></div><div class="a t" style="top:323.02px;font-size:7.3px;line-height:8.76px;color:#e8e8e8;font-weight:normal;white-space:nowrap;left:689.0999999999999px;--tw:37.1;transform-origin:left center;transform:scaleX(0.9513);"><span>6 Nov 20:50</span></div><div class="a t" style="top:323.02px;font-size:7.3px;line-height:8.76px;color:#e8e8e8;font-weight:normal;white-space:nowrap;left:734.8199999999999px;--tw:37.1;transform-origin:left center;transform:scaleX(0.9513);"><span>6 Nov 21:10</span></div><div class="a t" style="top:323.02px;font-size:7.3px;line-height:8.76px;color:#e8e8e8;font-weight:normal;white-space:nowrap;left:780.54px;--tw:37.1;transform-origin:left center;transform:scaleX(0.9513);"><span>6 Nov 21:30</span></div><div class="a t" style="top:323.02px;font-size:7.3px;line-height:8.76px;color:#e8e8e8;font-weight:normal;white-space:nowrap;left:826.26px;--tw:37.1;transform-origin:left center;transform:scaleX(0.9513);"><span>6 Nov 21:50</span></div><div class="a t" style="top:323.02px;font-size:7.3px;line-height:8.76px;color:#e8e8e8;font-weight:normal;white-space:nowrap;left:871.9799999999999px;--tw:37.1;transform-origin:left center;transform:scaleX(0.9513);"><span>6 Nov 22:10</span></div><div class="a t" style="top:323.02px;font-size:7.3px;line-height:8.76px;color:#e8e8e8;font-weight:normal;white-space:nowrap;left:917.6999999999999px;--tw:37.1;transform-origin:left center;transform:scaleX(0.9513);"><span>6 Nov 22:30</span></div><div class="a t" style="top:323.02px;font-size:7.3px;line-height:8.76px;color:#e8e8e8;font-weight:normal;white-space:nowrap;left:963.42px;--tw:37.1;transform-origin:left center;transform:scaleX(0.9513);"><span>6 Nov 22:50</span></div><div class="a t" style="top:93.26px;font-size:7.9px;line-height:9.48px;color:#f0f0f0;font-weight:normal;white-space:nowrap;left:992.7px;--tw:23.5;transform-origin:left center;transform:scaleX(0.9038);"><span>0.91825</span></div><div class="a t" style="top:117.78px;font-size:7.9px;line-height:9.48px;color:#f0f0f0;font-weight:normal;white-space:nowrap;left:992.7px;--tw:23.5;transform-origin:left center;transform:scaleX(0.9038);"><span>0.91765</span></div><div class="a t" style="top:142.30px;font-size:7.9px;line-height:9.48px;color:#f0f0f0;font-weight:normal;white-space:nowrap;left:992.7px;--tw:23.5;transform-origin:left center;transform:scaleX(0.9038);"><span>0.91705</span></div><div class="a t" style="top:166.82px;font-size:7.9px;line-height:9.48px;color:#f0f0f0;font-weight:normal;white-space:nowrap;left:992.7px;--tw:23.5;transform-origin:left center;transform:scaleX(0.9038);"><span>0.91645</span></div><div class="a t" style="top:191.34px;font-size:7.9px;line-height:9.48px;color:#f0f0f0;font-weight:normal;white-space:nowrap;left:992.7px;--tw:23.5;transform-origin:left center;transform:scaleX(0.9038);"><span>0.91585</span></div><div class="a t" style="top:215.86px;font-size:7.9px;line-height:9.48px;color:#f0f0f0;font-weight:normal;white-space:nowrap;left:992.7px;--tw:23.5;transform-origin:left center;transform:scaleX(0.9038);"><span>0.91525</span></div><div class="a t" style="top:240.38px;font-size:7.9px;line-height:9.48px;color:#f0f0f0;font-weight:normal;white-space:nowrap;left:992.7px;--tw:23.5;transform-origin:left center;transform:scaleX(0.9038);"><span>0.91465</span></div><div class="a t" style="top:264.90px;font-size:7.9px;line-height:9.48px;color:#f0f0f0;font-weight:normal;white-space:nowrap;left:992.7px;--tw:23.5;transform-origin:left center;transform:scaleX(0.9038);"><span>0.91405</span></div><div class="a t" style="top:289.42px;font-size:7.9px;line-height:9.48px;color:#f0f0f0;font-weight:normal;white-space:nowrap;left:992.7px;--tw:23.5;transform-origin:left center;transform:scaleX(0.9038);"><span>0.91345</span></div><div class="a t" style="top:313.94px;font-size:7.9px;line-height:9.48px;color:#f0f0f0;font-weight:normal;white-space:nowrap;left:992.7px;--tw:23.5;transform-origin:left center;transform:scaleX(0.9038);"><span>0.91285</span></div><div class="a" style="left:991px;top:157.0px;width:28px;height:8.2px;background:#6a96ec;"></div><div class="a t" style="top:156.66px;font-size:7.9px;line-height:9.48px;color:#0a1020;font-weight:normal;white-space:nowrap;left:992.7px;--tw:23.5;transform-origin:left center;transform:scaleX(0.9038);"><span>0.91668</span></div><div class="a" style="left:991px;top:256.9px;width:28px;height:8.2px;background:#ffffff;"></div><div class="a t" style="top:256.56px;font-size:7.9px;line-height:9.48px;color:#000;font-weight:normal;white-space:nowrap;left:992.7px;--tw:23.5;transform-origin:left center;transform:scaleX(0.9038);"><span>0.91425</span></div><div class="a" style="left:991px;top:293.4px;width:28px;height:8.2px;background:#f06ab4;"></div><div class="a t" style="top:293.06px;font-size:7.9px;line-height:9.48px;color:#1a0010;font-weight:normal;white-space:nowrap;left:992.7px;--tw:23.5;transform-origin:left center;transform:scaleX(0.9038);"><span>0.91334</span></div><svg class="a" style="left:6.5px;top:82.5px" width="5" height="3"><path d="M0 0 H5 L2.5 3z" fill="#e8e8e8"/></svg><div class="a t" style="top:79.52px;font-size:7.8px;line-height:9.36px;color:#e8e8e8;font-weight:normal;white-space:nowrap;left:15px;--tw:41;transform-origin:left center;transform:scaleX(0.8723);"><span>AUDCAD,M5</span></div><div class="a t" style="top:79.52px;font-size:7.8px;line-height:9.36px;color:#e8e8e8;font-weight:normal;white-space:nowrap;left:919px;--tw:57;transform-origin:left center;transform:scaleX(0.8906);"><span>BALANCEA_Ver.S</span></div><svg class="a" style="left:977px;top:80px" width="9" height="9"><circle cx="4.5" cy="4.5" r="3.6" fill="none" stroke="#e0e0e0" stroke-width="0.8"/><circle cx="3.2" cy="3.6" r="0.6" fill="#e0e0e0"/><circle cx="5.8" cy="3.6" r="0.6" fill="#e0e0e0"/><path d="M2.6 5.3 Q4.5 7 6.4 5.3" stroke="#e0e0e0" stroke-width="0.7" fill="none"/></svg><div class="a t" style="top:95.56px;font-size:7.9px;line-height:9.48px;color:#d0d0d0;font-weight:normal;white-space:nowrap;left:43.8px;--tw:26.6;transform-origin:left center;transform:scaleX(0.9500);"><span>buy 0.04</span></div><div class="a t" style="top:197.26px;font-size:7.9px;line-height:9.48px;color:#d0d0d0;font-weight:normal;white-space:nowrap;left:43.8px;--tw:26.6;transform-origin:left center;transform:scaleX(0.9500);"><span>sell 0.06</span></div><div class="a t" style="top:244.66px;font-size:7.9px;line-height:9.48px;color:#d0d0d0;font-weight:normal;white-space:nowrap;left:43.8px;--tw:26.6;transform-origin:left center;transform:scaleX(0.9500);"><span>buy 0.06</span></div><div class="a" style="left:1px;top:334.8px;width:1022px;height:164px;background:#f0f0f0;"></div><div class="a" style="left:12px;top:334.8px;width:1008px;height:3.5px;background:#f6faf6;"></div><div class="a" style="left:12px;top:338px;width:1008px;height:161.5px;background:#ffffff;"></div><div class="a" style="left:11.3px;top:338px;width:1009px;height:1px;background:#c8c8c8;"></div><div class="a" style="left:1.1px;top:348.4px;width:9.4px;height:167px;background:#d0dcea;"></div><div class="a t" style="top:336.20px;font-size:10px;line-height:12.00px;color:#222;font-weight:bold;white-space:nowrap;left:2.5px;"><span>×</span></div><div class="a" style="left:-10px;top:492.3px;width:32px;height:10px;transform:rotate(-90deg);transform-origin:center center;"><div style="font-size:7.4px;line-height:10px;color:#333;white-space:nowrap;letter-spacing:-0.6px;">ターミナル</div></div><div class="a" style="left:12px;top:339px;width:1008px;height:17.8px;background:#ffffff;border-bottom:1px solid #dcdcdc;box-sizing:border-box;"></div><div class="a" style="left:111px;top:339px;width:1px;height:17px;background:#e4e4e4;"></div><div class="a" style="left:249px;top:339px;width:1px;height:17px;background:#e4e4e4;"></div><div class="a" style="left:318px;top:339px;width:1px;height:17px;background:#e4e4e4;"></div><div class="a" style="left:371.5px;top:339px;width:1px;height:17px;background:#e4e4e4;"></div><div class="a" style="left:440px;top:339px;width:1px;height:17px;background:#e4e4e4;"></div><div class="a" style="left:517px;top:339px;width:1px;height:17px;background:#e4e4e4;"></div><div class="a" style="left:593px;top:339px;width:1px;height:17px;background:#e4e4e4;"></div><div class="a" style="left:669.3px;top:339px;width:1px;height:17px;background:#e4e4e4;"></div><div class="a" style="left:746.2px;top:339px;width:1px;height:17px;background:#e4e4e4;"></div><div class="a" style="left:822.4px;top:339px;width:1px;height:17px;background:#e4e4e4;"></div><div class="a" style="left:899px;top:339px;width:1px;height:17px;background:#e4e4e4;"></div><div class="a" style="left:12px;top:356px;width:1007.8px;height:14.600000000000023px;background:#ffffff;"></div><div class="a" style="left:111px;top:356px;width:1px;height:14.600000000000023px;background:#e2e2e2;"></div><div class="a" style="left:249px;top:356px;width:1px;height:14.600000000000023px;background:#e2e2e2;"></div><div class="a" style="left:318px;top:356px;width:1px;height:14.600000000000023px;background:#e2e2e2;"></div><div class="a" style="left:371.5px;top:356px;width:1px;height:14.600000000000023px;background:#e2e2e2;"></div><div class="a" style="left:440px;top:356px;width:1px;height:14.600000000000023px;background:#e2e2e2;"></div><div class="a" style="left:517px;top:356px;width:1px;height:14.600000000000023px;background:#e2e2e2;"></div><div class="a" style="left:593px;top:356px;width:1px;height:14.600000000000023px;background:#e2e2e2;"></div><div class="a" style="left:669.3px;top:356px;width:1px;height:14.600000000000023px;background:#e2e2e2;"></div><div class="a" style="left:746.2px;top:356px;width:1px;height:14.600000000000023px;background:#e2e2e2;"></div><div class="a" style="left:822.4px;top:356px;width:1px;height:14.600000000000023px;background:#e2e2e2;"></div><div class="a" style="left:899px;top:356px;width:1px;height:14.600000000000023px;background:#e2e2e2;"></div><div class="a" style="left:12px;top:370.6px;width:1007.8px;height:14.399999999999977px;background:#ebebeb;"></div><div class="a" style="left:111px;top:370.6px;width:1px;height:14.399999999999977px;background:#dadada;"></div><div class="a" style="left:249px;top:370.6px;width:1px;height:14.399999999999977px;background:#dadada;"></div><div class="a" style="left:318px;top:370.6px;width:1px;height:14.399999999999977px;background:#dadada;"></div><div class="a" style="left:371.5px;top:370.6px;width:1px;height:14.399999999999977px;background:#dadada;"></div><div class="a" style="left:440px;top:370.6px;width:1px;height:14.399999999999977px;background:#dadada;"></div><div class="a" style="left:517px;top:370.6px;width:1px;height:14.399999999999977px;background:#dadada;"></div><div class="a" style="left:593px;top:370.6px;width:1px;height:14.399999999999977px;background:#dadada;"></div><div class="a" style="left:669.3px;top:370.6px;width:1px;height:14.399999999999977px;background:#dadada;"></div><div class="a" style="left:746.2px;top:370.6px;width:1px;height:14.399999999999977px;background:#dadada;"></div><div class="a" style="left:822.4px;top:370.6px;width:1px;height:14.399999999999977px;background:#dadada;"></div><div class="a" style="left:899px;top:370.6px;width:1px;height:14.399999999999977px;background:#dadada;"></div><div class="a" style="left:12px;top:385px;width:1007.8px;height:14.300000000000011px;background:#ffffff;"></div><div class="a" style="left:111px;top:385px;width:1px;height:14.300000000000011px;background:#e2e2e2;"></div><div class="a" style="left:249px;top:385px;width:1px;height:14.300000000000011px;background:#e2e2e2;"></div><div class="a" style="left:318px;top:385px;width:1px;height:14.300000000000011px;background:#e2e2e2;"></div><div class="a" style="left:371.5px;top:385px;width:1px;height:14.300000000000011px;background:#e2e2e2;"></div><div class="a" style="left:440px;top:385px;width:1px;height:14.300000000000011px;background:#e2e2e2;"></div><div class="a" style="left:517px;top:385px;width:1px;height:14.300000000000011px;background:#e2e2e2;"></div><div class="a" style="left:593px;top:385px;width:1px;height:14.300000000000011px;background:#e2e2e2;"></div><div class="a" style="left:669.3px;top:385px;width:1px;height:14.300000000000011px;background:#e2e2e2;"></div><div class="a" style="left:746.2px;top:385px;width:1px;height:14.300000000000011px;background:#e2e2e2;"></div><div class="a" style="left:822.4px;top:385px;width:1px;height:14.300000000000011px;background:#e2e2e2;"></div><div class="a" style="left:899px;top:385px;width:1px;height:14.300000000000011px;background:#e2e2e2;"></div><div class="a" style="left:12px;top:399.3px;width:1007.8px;height:14.5px;background:#ebebeb;"></div><div class="a" style="left:111px;top:399.3px;width:1px;height:14.5px;background:#dadada;"></div><div class="a" style="left:249px;top:399.3px;width:1px;height:14.5px;background:#dadada;"></div><div class="a" style="left:318px;top:399.3px;width:1px;height:14.5px;background:#dadada;"></div><div class="a" style="left:371.5px;top:399.3px;width:1px;height:14.5px;background:#dadada;"></div><div class="a" style="left:440px;top:399.3px;width:1px;height:14.5px;background:#dadada;"></div><div class="a" style="left:517px;top:399.3px;width:1px;height:14.5px;background:#dadada;"></div><div class="a" style="left:593px;top:399.3px;width:1px;height:14.5px;background:#dadada;"></div><div class="a" style="left:669.3px;top:399.3px;width:1px;height:14.5px;background:#dadada;"></div><div class="a" style="left:746.2px;top:399.3px;width:1px;height:14.5px;background:#dadada;"></div><div class="a" style="left:822.4px;top:399.3px;width:1px;height:14.5px;background:#dadada;"></div><div class="a" style="left:899px;top:399.3px;width:1px;height:14.5px;background:#dadada;"></div><div class="a" style="left:12px;top:413.8px;width:1007.8px;height:14.2px;background:#c8c8c8;"></div><div class="a t" style="top:342.64px;font-size:8.6px;line-height:10.32px;color:#111;font-weight:normal;white-space:nowrap;left:17.3px;--tw:33.4;transform-origin:left center;transform:scaleX(1.1929);"><span>注文番号</span></div><div class="a t" style="top:342.64px;font-size:8.6px;line-height:10.32px;color:#111;font-weight:normal;white-space:nowrap;right:778.3px;text-align:right;--tw:17.3;transform-origin:right center;transform:scaleX(1.2357);"><span>時間</span></div><div class="a t" style="top:342.64px;font-size:8.6px;line-height:10.32px;color:#111;font-weight:normal;white-space:nowrap;right:710.4px;text-align:right;--tw:33;transform-origin:right center;transform:scaleX(1.1786);"><span>取引種別</span></div><div class="a t" style="top:342.64px;font-size:8.6px;line-height:10.32px;color:#111;font-weight:normal;white-space:nowrap;right:656.6px;text-align:right;--tw:16.2;transform-origin:right center;transform:scaleX(1.1571);"><span>数量</span></div><div class="a t" style="top:342.64px;font-size:8.6px;line-height:10.32px;color:#111;font-weight:normal;white-space:nowrap;right:587.3px;text-align:right;--tw:30.5;transform-origin:right center;transform:scaleX(1.0893);"><span>通貨ペア</span></div><div class="a t" style="top:342.64px;font-size:8.6px;line-height:10.32px;color:#111;font-weight:normal;white-space:nowrap;right:511.29999999999995px;text-align:right;--tw:16.2;transform-origin:right center;transform:scaleX(1.1571);"><span>価格</span></div><div class="a t" style="top:342.64px;font-size:8.6px;line-height:10.32px;color:#111;font-weight:normal;white-space:nowrap;right:434.70000000000005px;text-align:right;--tw:60.1;transform-origin:right center;transform:scaleX(1.0927);"><span>決済逆指値(S/L)</span></div><div class="a t" style="top:342.64px;font-size:8.6px;line-height:10.32px;color:#111;font-weight:normal;white-space:nowrap;right:358.5px;text-align:right;--tw:51.8;transform-origin:right center;transform:scaleX(1.0571);"><span>決済指値(T/P)</span></div><div class="a t" style="top:342.64px;font-size:8.6px;line-height:10.32px;color:#111;font-weight:normal;white-space:nowrap;right:282.4px;text-align:right;--tw:16.2;transform-origin:right center;transform:scaleX(1.1571);"><span>価格</span></div><div class="a t" style="top:342.64px;font-size:8.6px;line-height:10.32px;color:#111;font-weight:normal;white-space:nowrap;right:206px;text-align:right;--tw:24;transform-origin:right center;transform:scaleX(1.1429);"><span>手数料</span></div><div class="a t" style="top:342.64px;font-size:8.6px;line-height:10.32px;color:#111;font-weight:normal;white-space:nowrap;right:128.5px;text-align:right;--tw:25.5;transform-origin:right center;transform:scaleX(0.9107);"><span>スワップ</span></div><div class="a t" style="top:342.64px;font-size:8.6px;line-height:10.32px;color:#111;font-weight:normal;white-space:nowrap;right:8.700000000000045px;text-align:right;--tw:16.5;transform-origin:right center;transform:scaleX(1.1786);"><span>損益</span></div><div class="a t" style="top:343.90px;font-size:6.5px;line-height:7.80px;color:#888;font-weight:normal;white-space:nowrap;left:58.8px;"><span>/</span></div><div class="a t" style="top:358.28px;font-size:8.7px;line-height:10.44px;color:#0a0a0a;font-weight:normal;white-space:nowrap;right:776.5px;text-align:right;transform:scaleX(0.87);transform-origin:right center;"><span>2025.11.05 03:30:00</span></div><div class="a t" style="top:358.28px;font-size:8.7px;line-height:10.44px;color:#0a0a0a;font-weight:normal;white-space:nowrap;right:708.4px;text-align:right;transform:scaleX(0.87);transform-origin:right center;"><span>sell</span></div><div class="a t" style="top:358.28px;font-size:8.7px;line-height:10.44px;color:#0a0a0a;font-weight:normal;white-space:nowrap;right:654.6px;text-align:right;transform:scaleX(0.87);transform-origin:right center;"><span>0.04</span></div><div class="a t" style="top:358.28px;font-size:8.7px;line-height:10.44px;color:#0a0a0a;font-weight:normal;white-space:nowrap;right:586.5px;text-align:right;transform:scaleX(0.87);transform-origin:right center;"><span>audcad</span></div><div class="a t" style="top:358.28px;font-size:8.7px;line-height:10.44px;color:#0a0a0a;font-weight:normal;white-space:nowrap;right:509.29999999999995px;text-align:right;transform:scaleX(0.87);transform-origin:right center;"><span>0.91197</span></div><div class="a t" style="top:358.28px;font-size:8.7px;line-height:10.44px;color:#0a0a0a;font-weight:normal;white-space:nowrap;right:433.1px;text-align:right;transform:scaleX(0.87);transform-origin:right center;"><span>0.00000</span></div><div class="a t" style="top:358.28px;font-size:8.7px;line-height:10.44px;color:#0a0a0a;font-weight:normal;white-space:nowrap;right:356.5px;text-align:right;transform:scaleX(0.87);transform-origin:right center;"><span>0.00000</span></div><div class="a t" style="top:358.28px;font-size:8.7px;line-height:10.44px;color:#0a0a0a;font-weight:normal;white-space:nowrap;right:280.9px;text-align:right;transform:scaleX(0.87);transform-origin:right center;"><span>0.91461</span></div><div class="a t" style="top:358.28px;font-size:8.7px;line-height:10.44px;color:#0a0a0a;font-weight:normal;white-space:nowrap;right:203.70000000000005px;text-align:right;transform:scaleX(0.87);transform-origin:right center;"><span>0</span></div><div class="a t" style="top:358.28px;font-size:8.7px;line-height:10.44px;color:#0a0a0a;font-weight:normal;white-space:nowrap;right:127.5px;text-align:right;transform:scaleX(0.87);transform-origin:right center;"><span>-95</span></div><div class="a t" style="top:358.28px;font-size:8.7px;line-height:10.44px;color:#0a0a0a;font-weight:normal;white-space:nowrap;right:21px;text-align:right;transform:scaleX(0.87);transform-origin:right center;"><span>-1 145</span></div><div class="a t" style="top:357.80px;font-size:9.5px;line-height:11.40px;color:#999;font-weight:normal;white-space:nowrap;left:1009px;"><span>×</span></div><svg class="a" style="left:13.5px;top:357.5px" width="10" height="11.5" viewBox="0 0 10 11.5"><path d="M0.5 0.5 H5.5 L7.5 2.5 V10 H0.5z" fill="#fff" stroke="#777" stroke-width="0.8"/><circle cx="6.5" cy="8.5" r="2.7" fill="#e0502a"/></svg><div class="a t" style="top:372.78px;font-size:8.7px;line-height:10.44px;color:#0a0a0a;font-weight:normal;white-space:nowrap;right:776.5px;text-align:right;transform:scaleX(0.87);transform-origin:right center;"><span>2025.11.05 05:45:00</span></div><div class="a t" style="top:372.78px;font-size:8.7px;line-height:10.44px;color:#0a0a0a;font-weight:normal;white-space:nowrap;right:708.4px;text-align:right;transform:scaleX(0.87);transform-origin:right center;"><span>sell</span></div><div class="a t" style="top:372.78px;font-size:8.7px;line-height:10.44px;color:#0a0a0a;font-weight:normal;white-space:nowrap;right:654.6px;text-align:right;transform:scaleX(0.87);transform-origin:right center;"><span>0.06</span></div><div class="a t" style="top:372.78px;font-size:8.7px;line-height:10.44px;color:#0a0a0a;font-weight:normal;white-space:nowrap;right:586.5px;text-align:right;transform:scaleX(0.87);transform-origin:right center;"><span>audcad</span></div><div class="a t" style="top:372.78px;font-size:8.7px;line-height:10.44px;color:#0a0a0a;font-weight:normal;white-space:nowrap;right:509.29999999999995px;text-align:right;transform:scaleX(0.87);transform-origin:right center;"><span>0.91558</span></div><div class="a t" style="top:372.78px;font-size:8.7px;line-height:10.44px;color:#0a0a0a;font-weight:normal;white-space:nowrap;right:433.1px;text-align:right;transform:scaleX(0.87);transform-origin:right center;"><span>0.00000</span></div><div class="a t" style="top:372.78px;font-size:8.7px;line-height:10.44px;color:#0a0a0a;font-weight:normal;white-space:nowrap;right:356.5px;text-align:right;transform:scaleX(0.87);transform-origin:right center;"><span>0.00000</span></div><div class="a t" style="top:372.78px;font-size:8.7px;line-height:10.44px;color:#0a0a0a;font-weight:normal;white-space:nowrap;right:280.9px;text-align:right;transform:scaleX(0.87);transform-origin:right center;"><span>0.91461</span></div><div class="a t" style="top:372.78px;font-size:8.7px;line-height:10.44px;color:#0a0a0a;font-weight:normal;white-space:nowrap;right:203.70000000000005px;text-align:right;transform:scaleX(0.87);transform-origin:right center;"><span>0</span></div><div class="a t" style="top:372.78px;font-size:8.7px;line-height:10.44px;color:#0a0a0a;font-weight:normal;white-space:nowrap;right:127.5px;text-align:right;transform:scaleX(0.87);transform-origin:right center;"><span>-142</span></div><div class="a t" style="top:372.78px;font-size:8.7px;line-height:10.44px;color:#0a0a0a;font-weight:normal;white-space:nowrap;right:21px;text-align:right;transform:scaleX(0.87);transform-origin:right center;"><span>631</span></div><div class="a t" style="top:372.30px;font-size:9.5px;line-height:11.40px;color:#999;font-weight:normal;white-space:nowrap;left:1009px;"><span>×</span></div><svg class="a" style="left:13.5px;top:372.1px" width="10" height="11.5" viewBox="0 0 10 11.5"><path d="M0.5 0.5 H5.5 L7.5 2.5 V10 H0.5z" fill="#fff" stroke="#777" stroke-width="0.8"/><circle cx="6.5" cy="8.5" r="2.7" fill="#e0502a"/></svg><div class="a" style="left:28px;top:375.0px;width:32px;height:6px;background:#e0e4ea;filter:blur(1.2px);"></div><div class="a t" style="top:387.13px;font-size:8.7px;line-height:10.44px;color:#0a0a0a;font-weight:normal;white-space:nowrap;right:776.5px;text-align:right;transform:scaleX(0.87);transform-origin:right center;"><span>2025.11.05 17:40:00</span></div><div class="a t" style="top:387.13px;font-size:8.7px;line-height:10.44px;color:#0a0a0a;font-weight:normal;white-space:nowrap;right:708.4px;text-align:right;transform:scaleX(0.87);transform-origin:right center;"><span>buy</span></div><div class="a t" style="top:387.13px;font-size:8.7px;line-height:10.44px;color:#0a0a0a;font-weight:normal;white-space:nowrap;right:654.6px;text-align:right;transform:scaleX(0.87);transform-origin:right center;"><span>0.04</span></div><div class="a t" style="top:387.13px;font-size:8.7px;line-height:10.44px;color:#0a0a0a;font-weight:normal;white-space:nowrap;right:586.5px;text-align:right;transform:scaleX(0.87);transform-origin:right center;"><span>audcad</span></div><div class="a t" style="top:387.13px;font-size:8.7px;line-height:10.44px;color:#0a0a0a;font-weight:normal;white-space:nowrap;right:509.29999999999995px;text-align:right;transform:scaleX(0.87);transform-origin:right center;"><span>0.91807</span></div><div class="a t" style="top:387.13px;font-size:8.7px;line-height:10.44px;color:#0a0a0a;font-weight:normal;white-space:nowrap;right:433.1px;text-align:right;transform:scaleX(0.87);transform-origin:right center;"><span>0.00000</span></div><div class="a t" style="top:387.13px;font-size:8.7px;line-height:10.44px;color:#0a0a0a;font-weight:normal;white-space:nowrap;right:356.5px;text-align:right;transform:scaleX(0.87);transform-origin:right center;"><span>0.00000</span></div><div class="a t" style="top:387.13px;font-size:8.7px;line-height:10.44px;color:#0a0a0a;font-weight:normal;white-space:nowrap;right:280.9px;text-align:right;transform:scaleX(0.87);transform-origin:right center;"><span>0.91425</span></div><div class="a t" style="top:387.13px;font-size:8.7px;line-height:10.44px;color:#0a0a0a;font-weight:normal;white-space:nowrap;right:203.70000000000005px;text-align:right;transform:scaleX(0.87);transform-origin:right center;"><span>0</span></div><div class="a t" style="top:387.13px;font-size:8.7px;line-height:10.44px;color:#0a0a0a;font-weight:normal;white-space:nowrap;right:127.5px;text-align:right;transform:scaleX(0.87);transform-origin:right center;"><span>-4</span></div><div class="a t" style="top:387.13px;font-size:8.7px;line-height:10.44px;color:#0a0a0a;font-weight:normal;white-space:nowrap;right:21px;text-align:right;transform:scaleX(0.87);transform-origin:right center;"><span>-1 657</span></div><div class="a t" style="top:386.65px;font-size:9.5px;line-height:11.40px;color:#999;font-weight:normal;white-space:nowrap;left:1009px;"><span>×</span></div><svg class="a" style="left:13.5px;top:386.5px" width="10" height="11.5" viewBox="0 0 10 11.5"><path d="M0.5 0.5 H5.5 L7.5 2.5 V10 H0.5z" fill="#fff" stroke="#777" stroke-width="0.8"/><circle cx="6.5" cy="8.5" r="2.7" fill="#2a88d8"/></svg><div class="a t" style="top:401.53px;font-size:8.7px;line-height:10.44px;color:#0a0a0a;font-weight:normal;white-space:nowrap;right:776.5px;text-align:right;transform:scaleX(0.87);transform-origin:right center;"><span>2025.11.06 17:15:09</span></div><div class="a t" style="top:401.53px;font-size:8.7px;line-height:10.44px;color:#0a0a0a;font-weight:normal;white-space:nowrap;right:708.4px;text-align:right;transform:scaleX(0.87);transform-origin:right center;"><span>buy</span></div><div class="a t" style="top:401.53px;font-size:8.7px;line-height:10.44px;color:#0a0a0a;font-weight:normal;white-space:nowrap;right:654.6px;text-align:right;transform:scaleX(0.87);transform-origin:right center;"><span>0.06</span></div><div class="a t" style="top:401.53px;font-size:8.7px;line-height:10.44px;color:#0a0a0a;font-weight:normal;white-space:nowrap;right:586.5px;text-align:right;transform:scaleX(0.87);transform-origin:right center;"><span>audcad</span></div><div class="a t" style="top:401.53px;font-size:8.7px;line-height:10.44px;color:#0a0a0a;font-weight:normal;white-space:nowrap;right:509.29999999999995px;text-align:right;transform:scaleX(0.87);transform-origin:right center;"><span>0.91442</span></div><div class="a t" style="top:401.53px;font-size:8.7px;line-height:10.44px;color:#0a0a0a;font-weight:normal;white-space:nowrap;right:433.1px;text-align:right;transform:scaleX(0.87);transform-origin:right center;"><span>0.00000</span></div><div class="a t" style="top:401.53px;font-size:8.7px;line-height:10.44px;color:#0a0a0a;font-weight:normal;white-space:nowrap;right:356.5px;text-align:right;transform:scaleX(0.87);transform-origin:right center;"><span>0.00000</span></div><div class="a t" style="top:401.53px;font-size:8.7px;line-height:10.44px;color:#0a0a0a;font-weight:normal;white-space:nowrap;right:280.9px;text-align:right;transform:scaleX(0.87);transform-origin:right center;"><span>0.91425</span></div><div class="a t" style="top:401.53px;font-size:8.7px;line-height:10.44px;color:#0a0a0a;font-weight:normal;white-space:nowrap;right:203.70000000000005px;text-align:right;transform:scaleX(0.87);transform-origin:right center;"><span>0</span></div><div class="a t" style="top:401.53px;font-size:8.7px;line-height:10.44px;color:#0a0a0a;font-weight:normal;white-space:nowrap;right:127.5px;text-align:right;transform:scaleX(0.87);transform-origin:right center;"><span>0</span></div><div class="a t" style="top:401.53px;font-size:8.7px;line-height:10.44px;color:#0a0a0a;font-weight:normal;white-space:nowrap;right:21px;text-align:right;transform:scaleX(0.87);transform-origin:right center;"><span>-111</span></div><div class="a t" style="top:401.05px;font-size:9.5px;line-height:11.40px;color:#999;font-weight:normal;white-space:nowrap;left:1009px;"><span>×</span></div><svg class="a" style="left:13.5px;top:400.8px" width="10" height="11.5" viewBox="0 0 10 11.5"><path d="M0.5 0.5 H5.5 L7.5 2.5 V10 H0.5z" fill="#fff" stroke="#777" stroke-width="0.8"/><circle cx="6.5" cy="8.5" r="2.7" fill="#2a88d8"/></svg><div class="a" style="left:28px;top:403.75px;width:32px;height:6px;background:#e0e4ea;filter:blur(1.2px);"></div><svg class="a" style="left:14.5px;top:415px" width="8" height="11" viewBox="0 0 8 11"><rect x="0.5" y="0.5" width="7" height="10" fill="#fff" stroke="#999" stroke-width="0.7"/><path d="M4 2 V6 M2 5 L4 8 L6 5" stroke="#e03020" stroke-width="1.4" fill="none"/></svg><div class="a t" style="top:415.74px;font-size:8.6px;line-height:10.32px;color:#111;font-weight:bold;white-space:nowrap;left:27.8px;--tw:252.6;transform-origin:left center;transform:scaleX(0.9829);"><span>残高: 1 055 920 JPY&nbsp; 有効証拠金: 1 053 397&nbsp; 余剰証拠金: 1 053 397</span></div><div class="a t" style="top:415.68px;font-size:8.7px;line-height:10.44px;color:#111;font-weight:bold;white-space:nowrap;right:21px;text-align:right;--tw:25;transform-origin:right center;transform:scaleX(0.9615);"><span>-2 523</span></div><div class="a" style="left:45px;top:499px;width:975px;height:1px;background:#5a5a5a;"></div><div class="a" style="left:13.4px;top:499px;width:31.6px;height:14.5px;background:#ffffff;border:1px solid #5a5a5a;border-top:none;box-sizing:border-box;border-radius:0 0 1px 1px;"></div><div class="a t" style="top:500.64px;font-size:8.6px;line-height:10.32px;color:#111;font-weight:normal;white-space:nowrap;left:21.2px;--tw:16.5;transform-origin:left center;transform:scaleX(1.1786);"><span>取引</span></div><div class="a t" style="top:500.76px;font-size:8.4px;line-height:10.08px;color:#585858;font-weight:normal;white-space:nowrap;left:52.2px;--tw:34;transform-origin:left center;transform:scaleX(1.4167);"><span>運用比率</span></div><div class="a t" style="top:500.76px;font-size:8.4px;line-height:10.08px;color:#585858;font-weight:normal;white-space:nowrap;left:101.9px;--tw:32.3;transform-origin:left center;transform:scaleX(1.3458);"><span>口座履歴</span></div><div class="a t" style="top:500.76px;font-size:8.4px;line-height:10.08px;color:#585858;font-weight:normal;white-space:nowrap;left:149.9px;--tw:23.4;transform-origin:left center;transform:scaleX(0.9750);"><span>ニュース</span></div><div class="a t" style="top:500.76px;font-size:8.4px;line-height:10.08px;color:#585858;font-weight:normal;white-space:nowrap;left:187.4px;--tw:41.7;transform-origin:left center;transform:scaleX(1.1583);"><span>アラーム設定</span></div><div class="a t" style="top:500.76px;font-size:8.4px;line-height:10.08px;color:#585858;font-weight:normal;white-space:nowrap;left:243.2px;--tw:45;transform-origin:left center;transform:scaleX(1.0714);"><span>メールボックス</span></div><div class="a t" style="top:500.76px;font-size:8.4px;line-height:10.08px;color:#585858;font-weight:normal;white-space:nowrap;left:307.5px;--tw:30;transform-origin:left center;transform:scaleX(1.0000);"><span>マーケット</span></div><div class="a t" style="top:500.76px;font-size:8.4px;line-height:10.08px;color:#585858;font-weight:normal;white-space:nowrap;left:363px;--tw:16.7;transform-origin:left center;transform:scaleX(1.3917);"><span>記事</span></div><div class="a t" style="top:500.76px;font-size:8.4px;line-height:10.08px;color:#585858;font-weight:normal;white-space:nowrap;left:399.7px;--tw:30;transform-origin:left center;transform:scaleX(1.0000);"><span>ライブラリ</span></div><div class="a t" style="top:500.76px;font-size:8.4px;line-height:10.08px;color:#585858;font-weight:normal;white-space:nowrap;left:444px;--tw:38;transform-origin:left center;transform:scaleX(1.0556);"><span>エキスパート</span></div><div class="a t" style="top:500.76px;font-size:8.4px;line-height:10.08px;color:#585858;font-weight:normal;white-space:nowrap;left:496px;--tw:34;transform-origin:left center;transform:scaleX(1.4167);"><span>操作履歴</span></div><div class="a" style="left:93.7px;top:502px;width:1px;height:9px;background:#909090;"></div><div class="a" style="left:142.4px;top:502px;width:1px;height:9px;background:#909090;"></div><div class="a" style="left:181.1px;top:502px;width:1px;height:9px;background:#909090;"></div><div class="a" style="left:236.6px;top:502px;width:1px;height:9px;background:#909090;"></div><div class="a" style="left:300.5px;top:502px;width:1px;height:9px;background:#909090;"></div><div class="a" style="left:356px;top:502px;width:1px;height:9px;background:#909090;"></div><div class="a" style="left:392px;top:502px;width:1px;height:9px;background:#909090;"></div><div class="a" style="left:437px;top:502px;width:1px;height:9px;background:#909090;"></div><div class="a" style="left:489.6px;top:502px;width:1px;height:9px;background:#909090;"></div><div class="a" style="left:537.6px;top:502px;width:1px;height:9px;background:#909090;"></div><div class="a t" style="top:504.90px;font-size:6px;line-height:7.20px;color:#e02020;font-weight:normal;white-space:nowrap;left:289px;"><span>6</span></div><div class="a t" style="top:504.90px;font-size:6px;line-height:7.20px;color:#e02020;font-weight:normal;white-space:nowrap;left:339.3px;"><span>105</span></div><div class="a t" style="top:504.90px;font-size:6px;line-height:7.20px;color:#e02020;font-weight:normal;white-space:nowrap;left:381.5px;"><span>9</span></div><div class="a" style="left:1px;top:517px;width:1022px;height:1px;background:#c8c8c8;"></div><div class="a" style="left:1px;top:515px;width:1022px;height:1px;background:#f8f8f8;"></div><div class="a" style="left:1px;top:518px;width:1022px;height:1px;background:#fafafa;"></div><div class="a t" style="top:521.84px;font-size:8.6px;line-height:10.32px;color:#111;font-weight:normal;white-space:nowrap;left:2.4px;--tw:99;transform-origin:left center;transform:scaleX(0.9706);"><span>F1キーでヘルプが表示されます</span></div><div class="a" style="left:515px;top:520.7px;width:1px;height:12.8px;background:#c4c4c4;"></div><div class="a" style="left:598.7px;top:520.7px;width:1px;height:12.8px;background:#c4c4c4;"></div><div class="a" style="left:671.3px;top:520.7px;width:1px;height:12.8px;background:#c4c4c4;"></div><div class="a" style="left:721.8px;top:520.7px;width:1px;height:12.8px;background:#c4c4c4;"></div><div class="a" style="left:772.7px;top:520.7px;width:1px;height:12.8px;background:#c4c4c4;"></div><div class="a" style="left:821.2px;top:520.7px;width:1px;height:12.8px;background:#c4c4c4;"></div><div class="a" style="left:870.5px;top:520.7px;width:1px;height:12.8px;background:#c4c4c4;"></div><div class="a" style="left:917.8px;top:520.7px;width:1px;height:12.8px;background:#c4c4c4;"></div><div class="a t" style="top:521.84px;font-size:8.6px;line-height:10.32px;color:#111;font-weight:normal;white-space:nowrap;left:520px;--tw:26.6;transform-origin:left center;transform:scaleX(0.8867);"><span>Default</span></div><svg class="a" style="left:921.8px;top:521.5px" width="16.5" height="10" viewBox="0 0 16.5 10"><rect x="0.00" y="0.5" width="1.05" height="9.50" fill="#72843a"/><rect x="0.00" y="9.50" width="1.05" height="0.00" fill="#1f4f8c"/><rect x="1.65" y="0.5" width="1.05" height="8.75" fill="#72843a"/><rect x="1.65" y="8.75" width="1.05" height="0.75" fill="#1f4f8c"/><rect x="3.30" y="0.5" width="1.05" height="8.00" fill="#72843a"/><rect x="3.30" y="8.00" width="1.05" height="1.50" fill="#1f4f8c"/><rect x="4.95" y="0.5" width="1.05" height="7.25" fill="#72843a"/><rect x="4.95" y="7.25" width="1.05" height="2.25" fill="#1f4f8c"/><rect x="6.60" y="0.5" width="1.05" height="6.50" fill="#72843a"/><rect x="6.60" y="6.50" width="1.05" height="3.00" fill="#1f4f8c"/><rect x="8.25" y="0.5" width="1.05" height="5.75" fill="#72843a"/><rect x="8.25" y="5.75" width="1.05" height="3.75" fill="#1f4f8c"/><rect x="9.90" y="0.5" width="1.05" height="5.00" fill="#72843a"/><rect x="9.90" y="5.00" width="1.05" height="4.50" fill="#1f4f8c"/><rect x="11.55" y="0.5" width="1.05" height="4.25" fill="#72843a"/><rect x="11.55" y="4.25" width="1.05" height="5.25" fill="#1f4f8c"/><rect x="13.20" y="0.5" width="1.05" height="3.50" fill="#72843a"/><rect x="13.20" y="3.50" width="1.05" height="6.00" fill="#1f4f8c"/><rect x="14.85" y="0.5" width="1.05" height="2.75" fill="#72843a"/><rect x="14.85" y="2.75" width="1.05" height="6.75" fill="#1f4f8c"/></svg><div class="a t" style="top:521.84px;font-size:8.6px;line-height:10.32px;color:#111;font-weight:normal;white-space:nowrap;left:941.5px;--tw:52.5;transform-origin:left center;transform:scaleX(0.8607);"><span>655431/571 kb</span></div><svg class="a" style="left:1012px;top:524px" width="10" height="10" viewBox="0 0 10 10"><path d="M9 2 L2 9 M9 5 L5 9 M9 8 L8 9" stroke="#aaa" stroke-width="0.7"/></svg>
<script>
(function(){var ds=document.querySelectorAll('.t');for(var i=0;i<ds.length;i++){var d=ds[i];var tw=parseFloat(d.style.getPropertyValue('--tw'));if(!tw)continue;d.style.transform='none';var w=d.firstChild.getBoundingClientRect().width;if(w>0)d.style.transform='scaleX('+(tw/w).toFixed(4)+')';}})();
</script>
</body></html>
